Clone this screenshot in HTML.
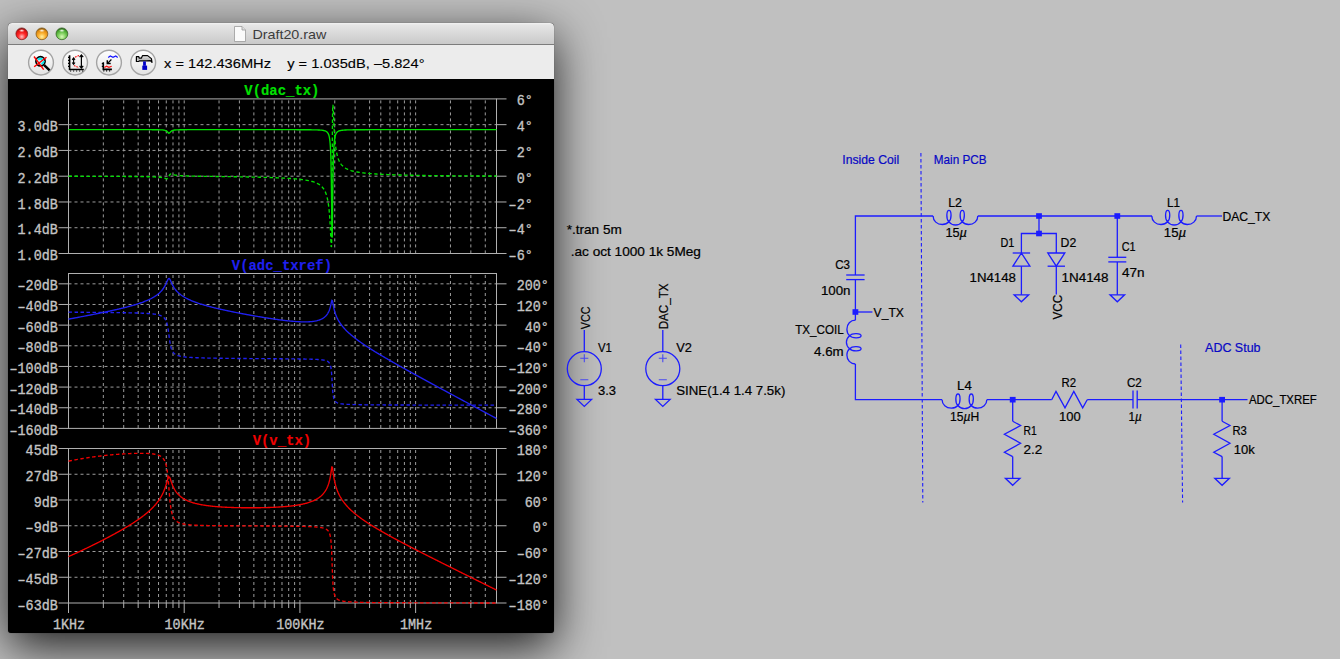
<!DOCTYPE html>
<html><head><meta charset="utf-8"><title>LTspice</title>
<style>
html,body{margin:0;padding:0;}
body{width:1340px;height:659px;overflow:hidden;position:relative;background:#c0c0c0;font-family:"Liberation Sans", sans-serif;}
</style></head><body>
<div style="position:absolute;left:8px;top:23px;width:546px;height:610px;border-radius:4px 4px 3px 3px;background:#000;box-shadow:0 14px 48px rgba(0,0,0,0.85),0 0 1px rgba(0,0,0,0.5);overflow:hidden">
  <div style="position:absolute;left:0;top:0;width:546px;height:21px;background:linear-gradient(#f2f2f2 0px,#e6e6e6 2px,#c9c9c9 21px);border-bottom:1px solid #7c7c7c;"></div>
  <div style="position:absolute;left:0;top:22px;width:546px;height:34px;background:#ececec;"></div>
</div>
<svg width="1340" height="659" style="position:absolute;left:0;top:0">
  <defs>
    <radialGradient id="gr" cx="50%" cy="75%" r="70%"><stop offset="0" stop-color="#ffc0c0"/><stop offset="0.45" stop-color="#ff2a2a"/><stop offset="0.8" stop-color="#e01010"/><stop offset="1" stop-color="#8a1010"/></radialGradient>
    <radialGradient id="gy" cx="50%" cy="75%" r="70%"><stop offset="0" stop-color="#fff0a0"/><stop offset="0.45" stop-color="#fbb030"/><stop offset="0.8" stop-color="#e08a10"/><stop offset="1" stop-color="#8a5a08"/></radialGradient>
    <radialGradient id="gg" cx="50%" cy="75%" r="70%"><stop offset="0" stop-color="#d8f8b8"/><stop offset="0.45" stop-color="#80d060"/><stop offset="0.8" stop-color="#4aa830"/><stop offset="1" stop-color="#2a6a18"/></radialGradient>
    <radialGradient id="hl" cx="50%" cy="50%" r="50%"><stop offset="0" stop-color="#ffffff" stop-opacity="0.95"/><stop offset="1" stop-color="#ffffff" stop-opacity="0"/></radialGradient>
    <linearGradient id="btn" x1="0" y1="0" x2="0" y2="1"><stop offset="0" stop-color="#ffffff"/><stop offset="1" stop-color="#e2e2e2"/></linearGradient>
  </defs>
  <circle cx="21.8" cy="33.8" r="5.9" fill="url(#gr)" stroke="#7a1818" stroke-width="0.7"/>
  <circle cx="41.9" cy="33.8" r="5.9" fill="url(#gy)" stroke="#7a5010" stroke-width="0.7"/>
  <circle cx="61.9" cy="33.8" r="5.9" fill="url(#gg)" stroke="#2a5a1a" stroke-width="0.7"/>
  <ellipse cx="21.8" cy="30.6" rx="3" ry="1.6" fill="url(#hl)"/>
  <ellipse cx="41.9" cy="30.6" rx="3" ry="1.6" fill="url(#hl)"/>
  <ellipse cx="61.9" cy="30.6" rx="3" ry="1.6" fill="url(#hl)"/>
  <!-- doc icon -->
  <path d="M234.5,26.5 H242 L245.5,30 V41.5 H234.5 Z" fill="#fafafa" stroke="#9a9a9a" stroke-width="0.8"/>
  <path d="M242,26.5 V30 H245.5" fill="#e0e0e0" stroke="#9a9a9a" stroke-width="0.8"/>
  <text x="252.4" y="38.5" font-family='"Liberation Sans", sans-serif' font-size="13" fill="#3c3c3c" textLength="74" lengthAdjust="spacingAndGlyphs">Draft20.raw</text>
  <!-- buttons -->
  <g stroke="#a4a4a4" stroke-width="1.4" fill="url(#btn)">
    <circle cx="41" cy="62.6" r="12.4"/>
    <circle cx="75.1" cy="62.6" r="12.4"/>
    <circle cx="109" cy="62.6" r="12.4"/>
    <circle cx="143.2" cy="62.6" r="12.4"/>
  </g>
  <!-- icon 1: magnifier with red X -->
  <g>
    <circle cx="40.5" cy="61.3" r="4.6" fill="#bff4f8" stroke="#000" stroke-width="1.7"/>
    <path d="M38,59.5 Q40,58 42.5,59.5 M41.5,64 Q43.5,63 44,61" stroke="#00e8f0" stroke-width="1.8" fill="none"/>
    <line x1="44.2" y1="65.2" x2="49.6" y2="70.4" stroke="#000" stroke-width="2.4"/>
    <line x1="34" y1="56.5" x2="43.7" y2="69.7" stroke="#ff0000" stroke-width="1.4"/>
    <line x1="46.5" y1="57.2" x2="34.2" y2="66.7" stroke="#ff0000" stroke-width="1.4"/>
  </g>
  <!-- icon 2 -->
  <g>
    <path d="M69.6,55.3 V69.5 H83.8" fill="none" stroke="#000" stroke-width="1.6"/>
    <path d="M68,57.4 h1.4 M68,60.4 h1.4 M68,63.4 h1.4 M68,66.4 h1.4 M70.6,70.4 v1.2 M73.6,70.4 v1.2 M76.6,70.4 v1.2 M79.6,70.4 v1.2 M82.6,70.4 v1.2" stroke="#000" stroke-width="1.1"/>
    <path d="M79,55.5 L74,57.6 M74,65.5 L79,67.8" fill="none" stroke="#ff1010" stroke-width="1.1" stroke-dasharray="1.6 1"/>
    <line x1="73.6" y1="58.3" x2="73.6" y2="64" stroke="#000" stroke-width="1.1"/>
    <path d="M72.2,59.8 L73.6,58 L75,59.8 M72.2,62.5 L73.6,64.3 L75,62.5" fill="none" stroke="#000" stroke-width="1.1"/>
    <line x1="81.4" y1="55.2" x2="81.4" y2="67.8" stroke="#000" stroke-width="1.2"/>
    <path d="M79.6,57.2 L81.4,55 L83.2,57.2 M79.6,65.8 L81.4,68 L83.2,65.8" fill="none" stroke="#000" stroke-width="1.2"/>
  </g>
  <!-- icon 3 -->
  <g>
    <path d="M103.3,62.3 V69.4 H111.9" fill="none" stroke="#000" stroke-width="1.6"/>
    <path d="M101.8,63.6 h1.4 M101.8,66.4 h1.4 M103.8,70.3 v1.2 M106.6,70.3 v1.2 M109.6,70.3 v1.2" stroke="#000" stroke-width="1.1"/>
    <path d="M104.3,67.6 L106.6,66.2 L108.9,67.4 L111.7,66.2" fill="none" stroke="#ff1010" stroke-width="1.2"/>
    <path d="M108.2,57.4 L110.3,56 L113,57.4 L115.8,56 L117.7,57.4" fill="none" stroke="#1010ff" stroke-width="1.2"/>
    <line x1="111.4" y1="59.5" x2="107.6" y2="63.3" stroke="#000" stroke-width="1.2"/>
    <path d="M107.3,60.2 V63.4 H110.7" fill="none" stroke="#000" stroke-width="1.5"/>
  </g>
  <!-- icon 4: hammer -->
  <g>
    <linearGradient id="hg" x1="0" y1="0" x2="0" y2="1"><stop offset="0" stop-color="#f4f4f4"/><stop offset="0.5" stop-color="#b8b8b8"/><stop offset="1" stop-color="#e8e8e8"/></linearGradient>
    <path d="M136.4,56.6 H138.8 L139.2,58.2 H141.3 L142.6,55.6 H147.6 L151.4,58.6 L152,62.4 L150.4,60.6 L146.2,60.9 H139.2 L138.8,61.5 H136.4 Z" fill="url(#hg)" stroke="#000" stroke-width="1.2" stroke-linejoin="round"/>
    <rect x="143.1" y="61.4" width="2.8" height="4.4" fill="#0000c8"/>
    <rect x="142.3" y="65.6" width="4.8" height="4.3" fill="#0000c8"/>
  </g>
  <text x="164" y="67.5" font-family='"Liberation Sans", sans-serif' font-size="13.4" fill="#000" stroke="#000" stroke-width="0.12" textLength="260.5" lengthAdjust="spacingAndGlyphs" xml:space="preserve">x = 142.436MHz    y = 1.035dB, &#x2013;5.824°</text>
</svg>

<svg width="1340" height="659" style="position:absolute;left:0;top:0">
<defs>
<clipPath id="cp0"><rect x="68.0" y="97.9" width="429.0" height="156.6"/></clipPath>
<clipPath id="cp1"><rect x="68.0" y="272.5" width="429.0" height="156.89999999999998"/></clipPath>
<clipPath id="cp2"><rect x="68.0" y="447.5" width="429.0" height="156.5"/></clipPath>
</defs>
<line x1="68.5" y1="124.67" x2="496.5" y2="124.67" stroke="#9c9c9c" stroke-width="1" stroke-dasharray="3 3"/>
<line x1="68.5" y1="150.43" x2="496.5" y2="150.43" stroke="#9c9c9c" stroke-width="1" stroke-dasharray="3 3"/>
<line x1="68.5" y1="176.20" x2="496.5" y2="176.20" stroke="#9c9c9c" stroke-width="1" stroke-dasharray="3 3"/>
<line x1="68.5" y1="201.97" x2="496.5" y2="201.97" stroke="#9c9c9c" stroke-width="1" stroke-dasharray="3 3"/>
<line x1="68.5" y1="227.73" x2="496.5" y2="227.73" stroke="#9c9c9c" stroke-width="1" stroke-dasharray="3 3"/>
<line x1="103.33" y1="100.4" x2="103.33" y2="253.5" stroke="#9c9c9c" stroke-width="1" stroke-dasharray="3 3"/>
<line x1="123.71" y1="100.4" x2="123.71" y2="253.5" stroke="#9c9c9c" stroke-width="1" stroke-dasharray="3 3"/>
<line x1="138.16" y1="100.4" x2="138.16" y2="253.5" stroke="#9c9c9c" stroke-width="1" stroke-dasharray="3 3"/>
<line x1="149.38" y1="100.4" x2="149.38" y2="253.5" stroke="#9c9c9c" stroke-width="1" stroke-dasharray="3 3"/>
<line x1="158.54" y1="100.4" x2="158.54" y2="253.5" stroke="#9c9c9c" stroke-width="1" stroke-dasharray="3 3"/>
<line x1="166.28" y1="100.4" x2="166.28" y2="253.5" stroke="#9c9c9c" stroke-width="1" stroke-dasharray="3 3"/>
<line x1="172.99" y1="100.4" x2="172.99" y2="253.5" stroke="#9c9c9c" stroke-width="1" stroke-dasharray="3 3"/>
<line x1="178.91" y1="100.4" x2="178.91" y2="253.5" stroke="#9c9c9c" stroke-width="1" stroke-dasharray="3 3"/>
<line x1="184.21" y1="100.4" x2="184.21" y2="253.5" stroke="#9c9c9c" stroke-width="1" stroke-dasharray="3 3"/>
<line x1="219.04" y1="100.4" x2="219.04" y2="253.5" stroke="#9c9c9c" stroke-width="1" stroke-dasharray="3 3"/>
<line x1="239.41" y1="100.4" x2="239.41" y2="253.5" stroke="#9c9c9c" stroke-width="1" stroke-dasharray="3 3"/>
<line x1="253.87" y1="100.4" x2="253.87" y2="253.5" stroke="#9c9c9c" stroke-width="1" stroke-dasharray="3 3"/>
<line x1="265.08" y1="100.4" x2="265.08" y2="253.5" stroke="#9c9c9c" stroke-width="1" stroke-dasharray="3 3"/>
<line x1="274.25" y1="100.4" x2="274.25" y2="253.5" stroke="#9c9c9c" stroke-width="1" stroke-dasharray="3 3"/>
<line x1="281.99" y1="100.4" x2="281.99" y2="253.5" stroke="#9c9c9c" stroke-width="1" stroke-dasharray="3 3"/>
<line x1="288.70" y1="100.4" x2="288.70" y2="253.5" stroke="#9c9c9c" stroke-width="1" stroke-dasharray="3 3"/>
<line x1="294.62" y1="100.4" x2="294.62" y2="253.5" stroke="#9c9c9c" stroke-width="1" stroke-dasharray="3 3"/>
<line x1="299.92" y1="100.4" x2="299.92" y2="253.5" stroke="#9c9c9c" stroke-width="1" stroke-dasharray="3 3"/>
<line x1="334.75" y1="100.4" x2="334.75" y2="253.5" stroke="#9c9c9c" stroke-width="1" stroke-dasharray="3 3"/>
<line x1="355.12" y1="100.4" x2="355.12" y2="253.5" stroke="#9c9c9c" stroke-width="1" stroke-dasharray="3 3"/>
<line x1="369.58" y1="100.4" x2="369.58" y2="253.5" stroke="#9c9c9c" stroke-width="1" stroke-dasharray="3 3"/>
<line x1="380.79" y1="100.4" x2="380.79" y2="253.5" stroke="#9c9c9c" stroke-width="1" stroke-dasharray="3 3"/>
<line x1="389.95" y1="100.4" x2="389.95" y2="253.5" stroke="#9c9c9c" stroke-width="1" stroke-dasharray="3 3"/>
<line x1="397.70" y1="100.4" x2="397.70" y2="253.5" stroke="#9c9c9c" stroke-width="1" stroke-dasharray="3 3"/>
<line x1="404.41" y1="100.4" x2="404.41" y2="253.5" stroke="#9c9c9c" stroke-width="1" stroke-dasharray="3 3"/>
<line x1="410.33" y1="100.4" x2="410.33" y2="253.5" stroke="#9c9c9c" stroke-width="1" stroke-dasharray="3 3"/>
<line x1="415.62" y1="100.4" x2="415.62" y2="253.5" stroke="#9c9c9c" stroke-width="1" stroke-dasharray="3 3"/>
<line x1="450.46" y1="100.4" x2="450.46" y2="253.5" stroke="#9c9c9c" stroke-width="1" stroke-dasharray="3 3"/>
<line x1="470.83" y1="100.4" x2="470.83" y2="253.5" stroke="#9c9c9c" stroke-width="1" stroke-dasharray="3 3"/>
<line x1="485.29" y1="100.4" x2="485.29" y2="253.5" stroke="#9c9c9c" stroke-width="1" stroke-dasharray="3 3"/>
<rect x="68.5" y="98.9" width="428.0" height="154.6" fill="none" stroke="#b0b0b0" stroke-width="1"/>
<line x1="58.5" y1="124.67" x2="68.5" y2="124.67" stroke="#b0b0b0" stroke-width="1"/>
<text x="17.55" y="0" transform="translate(0 131.24) scale(1 1.15)" font-family='"Liberation Mono", monospace' font-size="13.4" font-weight="normal" fill="#c4c4c4" stroke="#c4c4c4" stroke-width="0.32" textLength="40.25" lengthAdjust="spacingAndGlyphs">3.0dB</text>
<line x1="58.5" y1="150.43" x2="68.5" y2="150.43" stroke="#b0b0b0" stroke-width="1"/>
<text x="17.55" y="0" transform="translate(0 157.01) scale(1 1.15)" font-family='"Liberation Mono", monospace' font-size="13.4" font-weight="normal" fill="#c4c4c4" stroke="#c4c4c4" stroke-width="0.32" textLength="40.25" lengthAdjust="spacingAndGlyphs">2.6dB</text>
<line x1="58.5" y1="176.20" x2="68.5" y2="176.20" stroke="#b0b0b0" stroke-width="1"/>
<text x="17.55" y="0" transform="translate(0 182.78) scale(1 1.15)" font-family='"Liberation Mono", monospace' font-size="13.4" font-weight="normal" fill="#c4c4c4" stroke="#c4c4c4" stroke-width="0.32" textLength="40.25" lengthAdjust="spacingAndGlyphs">2.2dB</text>
<line x1="58.5" y1="201.97" x2="68.5" y2="201.97" stroke="#b0b0b0" stroke-width="1"/>
<text x="17.55" y="0" transform="translate(0 208.54) scale(1 1.15)" font-family='"Liberation Mono", monospace' font-size="13.4" font-weight="normal" fill="#c4c4c4" stroke="#c4c4c4" stroke-width="0.32" textLength="40.25" lengthAdjust="spacingAndGlyphs">1.8dB</text>
<line x1="58.5" y1="227.73" x2="68.5" y2="227.73" stroke="#b0b0b0" stroke-width="1"/>
<text x="17.55" y="0" transform="translate(0 234.31) scale(1 1.15)" font-family='"Liberation Mono", monospace' font-size="13.4" font-weight="normal" fill="#c4c4c4" stroke="#c4c4c4" stroke-width="0.32" textLength="40.25" lengthAdjust="spacingAndGlyphs">1.4dB</text>
<line x1="58.5" y1="253.50" x2="68.5" y2="253.50" stroke="#b0b0b0" stroke-width="1"/>
<text x="17.55" y="0" transform="translate(0 260.08) scale(1 1.15)" font-family='"Liberation Mono", monospace' font-size="13.4" font-weight="normal" fill="#c4c4c4" stroke="#c4c4c4" stroke-width="0.32" textLength="40.25" lengthAdjust="spacingAndGlyphs">1.0dB</text>
<line x1="496.5" y1="98.90" x2="506.5" y2="98.90" stroke="#b0b0b0" stroke-width="1"/>
<text x="516.65" y="0" transform="translate(0 105.48) scale(1 1.15)" font-family='"Liberation Mono", monospace' font-size="13.4" font-weight="normal" fill="#c4c4c4" stroke="#c4c4c4" stroke-width="0.32" textLength="16.10" lengthAdjust="spacingAndGlyphs">6°</text>
<line x1="496.5" y1="124.67" x2="506.5" y2="124.67" stroke="#b0b0b0" stroke-width="1"/>
<text x="516.65" y="0" transform="translate(0 131.24) scale(1 1.15)" font-family='"Liberation Mono", monospace' font-size="13.4" font-weight="normal" fill="#c4c4c4" stroke="#c4c4c4" stroke-width="0.32" textLength="16.10" lengthAdjust="spacingAndGlyphs">4°</text>
<line x1="496.5" y1="150.43" x2="506.5" y2="150.43" stroke="#b0b0b0" stroke-width="1"/>
<text x="516.65" y="0" transform="translate(0 157.01) scale(1 1.15)" font-family='"Liberation Mono", monospace' font-size="13.4" font-weight="normal" fill="#c4c4c4" stroke="#c4c4c4" stroke-width="0.32" textLength="16.10" lengthAdjust="spacingAndGlyphs">2°</text>
<line x1="496.5" y1="176.20" x2="506.5" y2="176.20" stroke="#b0b0b0" stroke-width="1"/>
<text x="516.65" y="0" transform="translate(0 182.78) scale(1 1.15)" font-family='"Liberation Mono", monospace' font-size="13.4" font-weight="normal" fill="#c4c4c4" stroke="#c4c4c4" stroke-width="0.32" textLength="16.10" lengthAdjust="spacingAndGlyphs">0°</text>
<line x1="496.5" y1="201.97" x2="506.5" y2="201.97" stroke="#b0b0b0" stroke-width="1"/>
<text x="508.60" y="0" transform="translate(0 208.54) scale(1 1.15)" font-family='"Liberation Mono", monospace' font-size="13.4" font-weight="normal" fill="#c4c4c4" stroke="#c4c4c4" stroke-width="0.32" textLength="24.15" lengthAdjust="spacingAndGlyphs">&#x2013;2°</text>
<line x1="496.5" y1="227.73" x2="506.5" y2="227.73" stroke="#b0b0b0" stroke-width="1"/>
<text x="508.60" y="0" transform="translate(0 234.31) scale(1 1.15)" font-family='"Liberation Mono", monospace' font-size="13.4" font-weight="normal" fill="#c4c4c4" stroke="#c4c4c4" stroke-width="0.32" textLength="24.15" lengthAdjust="spacingAndGlyphs">&#x2013;4°</text>
<line x1="496.5" y1="253.50" x2="506.5" y2="253.50" stroke="#b0b0b0" stroke-width="1"/>
<text x="508.60" y="0" transform="translate(0 260.08) scale(1 1.15)" font-family='"Liberation Mono", monospace' font-size="13.4" font-weight="normal" fill="#c4c4c4" stroke="#c4c4c4" stroke-width="0.32" textLength="24.15" lengthAdjust="spacingAndGlyphs">&#x2013;6°</text>
<text x="244.32" y="0" transform="translate(0 95.38) scale(1 1.15)" font-family='"Liberation Mono", monospace' font-size="13.4" font-weight="bold" fill="#00e000" stroke="#00e000" stroke-width="0.1" textLength="75.15" lengthAdjust="spacingAndGlyphs">V(dac_tx)</text>
<g clip-path="url(#cp0)">
<path d="M68.50,176.27 L69.19,176.27 L69.87,176.27 L70.56,176.28 L71.24,176.28 L71.93,176.28 L72.61,176.28 L73.30,176.28 L73.98,176.28 L74.67,176.28 L75.35,176.28 L76.04,176.29 L76.72,176.29 L77.41,176.29 L78.09,176.29 L78.78,176.29 L79.46,176.29 L80.15,176.29 L80.83,176.29 L81.52,176.30 L82.20,176.30 L82.89,176.30 L83.57,176.30 L84.26,176.30 L84.94,176.30 L85.63,176.30 L86.31,176.31 L87.00,176.31 L87.68,176.31 L88.37,176.31 L89.05,176.31 L89.74,176.31 L90.42,176.31 L91.11,176.32 L91.79,176.32 L92.48,176.32 L93.16,176.32 L93.85,176.32 L94.53,176.33 L95.22,176.33 L95.90,176.33 L96.59,176.33 L97.27,176.33 L97.96,176.33 L98.64,176.34 L99.33,176.34 L100.01,176.34 L100.70,176.34 L101.38,176.35 L102.07,176.35 L102.75,176.35 L103.44,176.35 L104.12,176.35 L104.81,176.36 L105.49,176.36 L106.18,176.36 L106.86,176.36 L107.55,176.37 L108.23,176.37 L108.92,176.37 L109.60,176.37 L110.29,176.38 L110.97,176.38 L111.66,176.38 L112.34,176.39 L113.03,176.39 L113.71,176.39 L114.40,176.40 L115.09,176.40 L115.77,176.40 L116.46,176.40 L117.14,176.41 L117.83,176.41 L118.51,176.42 L119.20,176.42 L119.88,176.42 L120.57,176.43 L121.25,176.43 L121.94,176.43 L122.62,176.44 L123.31,176.44 L123.99,176.45 L124.68,176.45 L125.36,176.46 L126.05,176.46 L126.73,176.46 L127.42,176.47 L128.10,176.47 L128.79,176.48 L129.47,176.49 L130.16,176.49 L130.84,176.50 L131.53,176.50 L132.21,176.51 L132.90,176.51 L133.58,176.52 L134.27,176.53 L134.95,176.53 L135.64,176.54 L136.32,176.55 L137.01,176.56 L137.69,176.56 L138.38,176.57 L139.06,176.58 L139.75,176.59 L140.43,176.60 L141.12,176.61 L141.80,176.62 L142.49,176.63 L143.17,176.64 L143.86,176.65 L144.54,176.66 L145.23,176.67 L145.91,176.69 L146.60,176.70 L147.28,176.71 L147.97,176.73 L148.65,176.75 L149.34,176.76 L150.02,176.78 L150.71,176.80 L151.39,176.82 L152.08,176.84 L152.76,176.87 L153.45,176.89 L154.13,176.92 L154.82,176.95 L155.50,176.98 L156.19,177.02 L156.87,177.06 L157.56,177.10 L158.24,177.15 L158.84,177.20 L159.44,177.25 L160.04,177.31 L160.64,177.38 L161.24,177.45 L161.84,177.53 L162.44,177.63 L163.04,177.74 L163.64,177.86 L164.22,178.00 L164.81,178.16 L165.40,178.33 L165.98,178.51 L166.57,178.67 L167.18,178.72 L167.74,178.50 L168.18,178.03 L168.48,177.49 L168.74,176.92 L168.97,176.37 L169.20,175.81 L169.45,175.25 L169.76,174.71 L170.17,174.25 L170.73,174.01 L171.34,174.06 L171.93,174.21 L172.51,174.39 L173.10,174.57 L173.69,174.73 L174.27,174.87 L174.88,175.00 L175.50,175.11 L176.11,175.21 L176.72,175.29 L177.33,175.37 L177.94,175.43 L178.56,175.50 L179.31,175.56 L180.00,175.61 L180.68,175.66 L181.37,175.71 L182.05,175.74 L182.74,175.78 L183.42,175.81 L184.11,175.84 L184.79,175.87 L185.48,175.90 L186.16,175.92 L186.85,175.95 L187.53,175.97 L188.22,175.99 L188.90,176.01 L189.59,176.03 L190.27,176.05 L190.96,176.06 L191.64,176.08 L192.33,176.10 L193.01,176.11 L193.70,176.13 L194.38,176.14 L195.07,176.15 L195.75,176.17 L196.44,176.18 L197.12,176.19 L197.81,176.20 L198.49,176.21 L199.18,176.23 L199.86,176.24 L200.55,176.25 L201.23,176.26 L201.92,176.27 L202.60,176.28 L203.29,176.29 L203.97,176.30 L204.66,176.31 L205.34,176.32 L206.03,176.33 L206.71,176.34 L207.40,176.35 L208.08,176.36 L208.77,176.37 L209.45,176.38 L210.14,176.39 L210.82,176.40 L211.51,176.41 L212.19,176.42 L212.88,176.43 L213.56,176.43 L214.25,176.44 L214.93,176.45 L215.62,176.46 L216.30,176.47 L216.99,176.48 L217.67,176.49 L218.36,176.50 L219.05,176.51 L219.73,176.52 L220.42,176.53 L221.10,176.54 L221.79,176.54 L222.47,176.55 L223.16,176.56 L223.84,176.57 L224.53,176.58 L225.21,176.59 L225.90,176.60 L226.58,176.61 L227.27,176.62 L227.95,176.63 L228.64,176.64 L229.32,176.65 L230.01,176.66 L230.69,176.67 L231.38,176.68 L232.06,176.69 L232.75,176.70 L233.43,176.71 L234.12,176.72 L234.80,176.73 L235.49,176.74 L236.17,176.76 L236.86,176.77 L237.54,176.78 L238.23,176.79 L238.91,176.80 L239.60,176.81 L240.28,176.82 L240.97,176.84 L241.65,176.85 L242.34,176.86 L243.02,176.87 L243.71,176.88 L244.39,176.90 L245.08,176.91 L245.76,176.92 L246.45,176.93 L247.13,176.95 L247.82,176.96 L248.50,176.97 L249.19,176.99 L249.87,177.00 L250.56,177.02 L251.24,177.03 L251.93,177.05 L252.61,177.06 L253.30,177.08 L253.98,177.09 L254.67,177.11 L255.35,177.12 L256.04,177.14 L256.72,177.15 L257.41,177.17 L258.09,177.19 L258.78,177.20 L259.46,177.22 L260.15,177.24 L260.83,177.26 L261.52,177.27 L262.20,177.29 L262.89,177.31 L263.57,177.33 L264.26,177.35 L264.94,177.37 L265.63,177.39 L266.32,177.41 L267.00,177.43 L267.69,177.45 L268.37,177.47 L269.06,177.50 L269.74,177.52 L270.43,177.54 L271.11,177.57 L271.80,177.59 L272.48,177.61 L273.17,177.64 L273.85,177.66 L274.54,177.69 L275.22,177.72 L275.91,177.74 L276.59,177.77 L277.28,177.80 L277.96,177.83 L278.65,177.86 L279.33,177.89 L280.02,177.92 L280.70,177.95 L281.39,177.98 L282.07,178.02 L282.76,178.05 L283.44,178.09 L284.13,178.12 L284.81,178.16 L285.50,178.20 L286.18,178.24 L286.87,178.28 L287.55,178.32 L288.24,178.36 L288.92,178.40 L289.61,178.45 L290.29,178.50 L290.98,178.54 L291.66,178.59 L292.35,178.64 L293.03,178.70 L293.72,178.75 L294.40,178.81 L295.09,178.86 L295.77,178.92 L296.46,178.99 L297.14,179.05 L297.83,179.12 L298.51,179.19 L299.20,179.26 L299.88,179.33 L300.57,179.41 L301.25,179.49 L301.94,179.58 L302.62,179.67 L303.31,179.76 L303.99,179.86 L304.68,179.96 L305.36,180.06 L306.05,180.17 L306.73,180.29 L307.42,180.42 L308.10,180.55 L308.79,180.68 L309.47,180.83 L310.16,180.98 L310.84,181.15 L311.53,181.32 L312.22,181.51 L312.90,181.71 L313.59,181.92 L314.27,182.15 L314.96,182.40 L315.64,182.67 L316.33,182.96 L317.01,183.27 L317.70,183.62 L318.38,183.99 L319.07,184.41 L319.58,184.75 L320.09,185.12 L320.61,185.53 L321.12,185.97 L321.63,186.45 L322.15,186.98 L322.66,187.57 L323.18,188.22 L323.53,188.72 L323.88,189.23 L324.20,189.75 L324.52,190.32 L324.81,190.88 L325.09,191.44 L325.34,192.00 L325.57,192.56 L325.82,193.17 L326.04,193.79 L326.25,194.39 L326.46,195.03 L326.64,195.63 L326.82,196.28 L326.98,196.88 L327.14,197.51 L327.29,198.13 L327.44,198.80 L327.57,199.44 L327.71,200.12 L327.82,200.72 L327.94,201.35 L328.05,202.01 L328.17,202.70 L328.28,203.43 L328.37,204.04 L328.46,204.68 L328.56,205.34 L328.65,206.04 L328.74,206.77 L328.83,207.52 L328.90,208.12 L328.97,208.74 L329.03,209.38 L329.10,210.04 L329.17,210.72 L329.24,211.44 L329.31,212.18 L329.38,212.95 L329.45,213.75 L329.51,214.57 L329.58,215.45 L329.65,216.35 L329.70,216.96 L329.74,217.60 L329.79,218.25 L329.83,218.93 L329.88,219.61 L329.92,220.32 L329.97,221.05 L330.02,221.80 L330.06,222.56 L330.11,223.35 L330.15,224.16 L330.20,224.98 L330.24,225.84 L330.29,226.72 L330.34,227.61 L330.37,228.29 L330.40,229.00 L330.45,229.95 L330.50,230.91 L330.54,231.90 L330.59,232.91 L330.63,233.94 L330.68,234.98 L330.71,235.76 L330.75,236.56 L330.79,237.62 L330.83,238.50 L330.86,239.11 L330.88,239.73 L330.91,240.34 L330.94,240.94 L330.96,241.56 L330.99,242.17 L331.02,242.78 L331.05,243.40 L331.08,244.01 L331.11,244.62 L331.14,245.22 L331.18,245.83 L331.22,246.43 L331.27,247.03 L331.49,246.46 L331.52,245.86 L331.54,245.24 L331.56,244.62 L331.58,244.02 L331.59,243.41 L331.61,242.80 L331.62,242.17 L331.63,241.54 L331.64,240.91 L331.66,240.30 L331.67,239.66 L331.68,239.04 L331.69,238.39 L331.69,237.77 L331.70,237.13 L331.71,236.47 L331.72,235.84 L331.73,235.20 L331.74,234.54 L331.74,233.93 L331.75,233.30 L331.76,232.66 L331.76,232.00 L331.77,231.32 L331.78,230.72 L331.78,230.09 L331.79,229.46 L331.80,228.81 L331.80,228.15 L331.81,227.47 L331.81,226.78 L331.82,226.18 L331.82,225.57 L331.83,224.95 L331.84,224.32 L331.84,223.68 L331.85,223.02 L331.85,222.36 L331.86,221.69 L331.86,221.01 L331.87,220.31 L331.87,219.61 L331.88,218.90 L331.88,218.30 L331.89,217.69 L331.89,217.08 L331.90,216.46 L331.90,215.83 L331.90,215.20 L331.91,214.56 L331.91,213.91 L331.92,213.26 L331.92,212.60 L331.93,211.94 L331.93,211.26 L331.93,210.59 L331.94,209.90 L331.94,209.21 L331.95,208.52 L331.95,207.82 L331.96,207.11 L331.96,206.40 L331.97,205.68 L331.97,204.96 L331.97,204.23 L331.98,203.50 L331.98,202.76 L331.99,202.01 L331.99,201.27 L332.00,200.66 L332.00,200.06 L332.00,199.45 L332.01,198.84 L332.01,198.23 L332.01,197.61 L332.02,196.99 L332.02,196.37 L332.02,195.74 L332.03,195.12 L332.03,194.49 L332.03,193.86 L332.04,193.22 L332.04,192.59 L332.05,191.95 L332.05,191.31 L332.05,190.67 L332.06,190.03 L332.06,189.38 L332.06,188.74 L332.07,188.09 L332.07,187.44 L332.07,186.79 L332.08,186.13 L332.08,185.48 L332.08,184.82 L332.09,184.17 L332.09,183.51 L332.09,182.85 L332.10,182.19 L332.10,181.53 L332.11,180.87 L332.11,180.21 L332.11,179.55 L332.12,178.89 L332.12,178.23 L332.12,177.56 L332.13,176.90 L332.13,176.24 L332.13,175.57 L332.14,174.91 L332.14,174.25 L332.14,173.59 L332.15,172.92 L332.15,172.26 L332.15,171.60 L332.16,170.94 L332.16,170.29 L332.17,169.62 L332.17,168.96 L332.17,168.31 L332.18,167.65 L332.18,166.99 L332.18,166.34 L332.19,165.69 L332.19,165.04 L332.19,164.39 L332.20,163.74 L332.20,163.09 L332.20,162.45 L332.21,161.80 L332.21,161.16 L332.21,160.52 L332.22,159.88 L332.22,159.25 L332.23,158.61 L332.23,157.98 L332.23,157.35 L332.24,156.73 L332.24,156.10 L332.24,155.48 L332.25,154.86 L332.25,154.25 L332.25,153.63 L332.26,153.02 L332.26,152.41 L332.26,151.81 L332.27,151.20 L332.27,150.46 L332.28,149.81 L332.28,149.12 L332.28,148.38 L332.29,147.65 L332.29,146.93 L332.30,146.21 L332.30,145.50 L332.31,144.79 L332.31,144.09 L332.32,143.39 L332.32,142.70 L332.32,142.01 L332.33,141.33 L332.33,140.66 L332.34,139.99 L332.34,139.33 L332.35,138.68 L332.35,138.03 L332.35,137.39 L332.36,136.75 L332.36,136.12 L332.37,135.50 L332.37,134.89 L332.38,134.28 L332.38,133.67 L332.39,132.96 L332.39,132.26 L332.40,131.56 L332.40,130.88 L332.41,130.20 L332.41,129.58 L332.42,128.88 L332.42,128.24 L332.43,127.60 L332.43,126.98 L332.44,126.37 L332.44,125.76 L332.45,125.07 L332.46,124.39 L332.46,123.73 L332.47,123.08 L332.48,122.44 L332.48,121.81 L332.49,121.20 L332.50,120.52 L332.50,119.86 L332.51,119.21 L332.52,118.58 L332.52,117.97 L332.53,117.31 L332.54,116.66 L332.55,116.03 L332.56,115.43 L332.56,114.78 L332.57,114.18 L332.58,113.56 L332.59,112.93 L332.60,112.33 L332.61,111.71 L332.62,111.07 L332.64,110.43 L332.65,109.83 L332.66,109.19 L332.68,108.57 L332.69,107.95 L332.71,107.33 L332.73,106.73 L332.76,106.12 L332.79,105.51 L332.86,104.91 L333.00,105.50 L333.05,106.11 L333.09,106.72 L333.13,107.33 L333.16,107.94 L333.19,108.55 L333.22,109.15 L333.25,109.75 L333.28,110.37 L333.30,110.98 L333.33,111.58 L333.36,112.18 L333.38,112.79 L333.41,113.41 L333.44,114.03 L333.46,114.64 L333.51,115.70 L333.55,116.76 L333.60,117.81 L333.65,118.84 L333.69,119.86 L333.74,120.86 L333.78,121.84 L333.83,122.80 L333.87,123.74 L333.92,124.66 L333.96,125.56 L334.01,126.43 L334.06,127.29 L334.10,128.12 L334.14,128.76 L334.19,129.72 L334.24,130.49 L334.28,131.24 L334.33,131.97 L334.38,132.68 L334.42,133.37 L334.47,134.05 L334.51,134.70 L334.56,135.34 L334.60,135.96 L334.65,136.56 L334.72,137.44 L334.79,138.29 L334.85,139.10 L334.92,139.88 L334.99,140.63 L335.06,141.36 L335.13,142.05 L335.20,142.73 L335.27,143.37 L335.33,144.00 L335.40,144.60 L335.49,145.38 L335.59,146.11 L335.68,146.82 L335.77,147.49 L335.86,148.14 L335.95,148.76 L336.04,149.35 L336.16,150.06 L336.27,150.73 L336.38,151.38 L336.50,151.99 L336.64,152.68 L336.77,153.34 L336.91,153.96 L337.05,154.55 L337.21,155.21 L337.37,155.82 L337.53,156.40 L337.71,157.03 L337.89,157.62 L338.10,158.24 L338.30,158.82 L338.53,159.42 L338.76,159.99 L339.01,160.57 L339.28,161.14 L339.56,161.70 L339.85,162.25 L340.17,162.80 L340.52,163.34 L340.86,163.84 L341.22,164.34 L341.61,164.82 L342.02,165.29 L342.53,165.83 L343.04,166.32 L343.56,166.76 L344.07,167.17 L344.58,167.55 L345.10,167.90 L345.61,168.22 L346.30,168.61 L346.98,168.97 L347.67,169.29 L348.35,169.59 L349.04,169.87 L349.72,170.12 L350.41,170.36 L351.09,170.58 L351.78,170.78 L352.46,170.98 L353.15,171.15 L353.83,171.32 L354.52,171.48 L355.20,171.63 L355.89,171.77 L356.57,171.90 L357.26,172.03 L357.94,172.15 L358.63,172.26 L359.31,172.37 L360.00,172.47 L360.68,172.57 L361.37,172.67 L362.05,172.76 L362.74,172.84 L363.42,172.92 L364.11,173.00 L364.79,173.08 L365.48,173.15 L366.16,173.22 L366.85,173.29 L367.53,173.35 L368.22,173.42 L368.90,173.48 L369.59,173.53 L370.28,173.59 L370.96,173.65 L371.65,173.70 L372.33,173.75 L373.02,173.80 L373.70,173.85 L374.39,173.89 L375.07,173.94 L375.76,173.98 L376.44,174.02 L377.13,174.07 L377.81,174.11 L378.50,174.15 L379.18,174.18 L379.87,174.22 L380.55,174.26 L381.24,174.29 L381.92,174.33 L382.61,174.36 L383.29,174.39 L383.98,174.42 L384.66,174.45 L385.35,174.48 L386.03,174.51 L386.72,174.54 L387.40,174.57 L388.09,174.60 L388.77,174.62 L389.46,174.65 L390.14,174.68 L390.83,174.70 L391.51,174.73 L392.20,174.75 L392.88,174.77 L393.57,174.80 L394.25,174.82 L394.94,174.84 L395.62,174.86 L396.31,174.88 L396.99,174.90 L397.68,174.92 L398.36,174.94 L399.05,174.96 L399.73,174.98 L400.42,175.00 L401.10,175.02 L401.79,175.04 L402.47,175.06 L403.16,175.07 L403.84,175.09 L404.53,175.11 L405.21,175.12 L405.90,175.14 L406.58,175.16 L407.27,175.17 L407.95,175.19 L408.64,175.20 L409.32,175.22 L410.01,175.23 L410.69,175.25 L411.38,175.26 L412.06,175.27 L412.75,175.29 L413.43,175.30 L414.12,175.31 L414.80,175.33 L415.49,175.34 L416.18,175.35 L416.86,175.36 L417.55,175.38 L418.23,175.39 L418.92,175.40 L419.60,175.41 L420.29,175.42 L420.97,175.43 L421.66,175.45 L422.34,175.46 L423.03,175.47 L423.71,175.48 L424.40,175.49 L425.08,175.50 L425.77,175.51 L426.45,175.52 L427.14,175.53 L427.82,175.54 L428.51,175.55 L429.19,175.56 L429.88,175.56 L430.56,175.57 L431.25,175.58 L431.93,175.59 L432.62,175.60 L433.30,175.61 L433.99,175.62 L434.67,175.62 L435.36,175.63 L436.04,175.64 L436.73,175.65 L437.41,175.66 L438.10,175.66 L438.78,175.67 L439.47,175.68 L440.15,175.69 L440.84,175.69 L441.52,175.70 L442.21,175.71 L442.89,175.71 L443.58,175.72 L444.26,175.73 L444.95,175.73 L445.63,175.74 L446.32,175.75 L447.00,175.75 L447.69,175.76 L448.37,175.76 L449.06,175.77 L449.74,175.78 L450.43,175.78 L451.11,175.79 L451.80,175.79 L452.48,175.80 L453.17,175.81 L453.85,175.81 L454.54,175.82 L455.22,175.82 L455.91,175.83 L456.59,175.83 L457.28,175.84 L457.96,175.84 L458.65,175.85 L459.33,175.85 L460.02,175.86 L460.70,175.86 L461.39,175.87 L462.08,175.87 L462.76,175.87 L463.45,175.88 L464.13,175.88 L464.82,175.89 L465.50,175.89 L466.19,175.90 L466.87,175.90 L467.56,175.90 L468.24,175.91 L468.93,175.91 L469.61,175.92 L470.30,175.92 L470.98,175.92 L471.67,175.93 L472.35,175.93 L473.04,175.94 L473.72,175.94 L474.41,175.94 L475.09,175.95 L475.78,175.95 L476.46,175.95 L477.15,175.96 L477.83,175.96 L478.52,175.96 L479.20,175.97 L479.89,175.97 L480.57,175.97 L481.26,175.98 L481.94,175.98 L482.63,175.98 L483.31,175.98 L484.00,175.99 L484.68,175.99 L485.37,175.99 L486.05,176.00 L486.74,176.00 L487.42,176.00 L488.11,176.00 L488.79,176.01 L489.48,176.01 L490.16,176.01 L490.85,176.01 L491.53,176.02 L492.22,176.02 L492.90,176.02 L493.59,176.02 L494.27,176.03 L494.96,176.03 L495.64,176.03 L496.33,176.03 L496.50,176.03" fill="none" stroke="#00e000" stroke-width="1.35" stroke-dasharray="3.5 2.5"/>
<path d="M68.50,129.66 L69.19,129.66 L69.87,129.66 L70.56,129.66 L71.24,129.66 L71.93,129.66 L72.61,129.66 L73.30,129.66 L73.98,129.66 L74.67,129.66 L75.35,129.66 L76.04,129.66 L76.72,129.66 L77.41,129.66 L78.09,129.66 L78.78,129.66 L79.46,129.66 L80.15,129.66 L80.83,129.66 L81.52,129.66 L82.20,129.66 L82.89,129.66 L83.57,129.66 L84.26,129.66 L84.94,129.66 L85.63,129.66 L86.31,129.66 L87.00,129.66 L87.68,129.66 L88.37,129.66 L89.05,129.66 L89.74,129.66 L90.42,129.66 L91.11,129.66 L91.79,129.66 L92.48,129.66 L93.16,129.66 L93.85,129.66 L94.53,129.66 L95.22,129.66 L95.90,129.66 L96.59,129.66 L97.27,129.66 L97.96,129.66 L98.64,129.66 L99.33,129.66 L100.01,129.66 L100.70,129.66 L101.38,129.66 L102.07,129.66 L102.75,129.66 L103.44,129.66 L104.12,129.66 L104.81,129.66 L105.49,129.66 L106.18,129.66 L106.86,129.66 L107.55,129.66 L108.23,129.66 L108.92,129.66 L109.60,129.66 L110.29,129.66 L110.97,129.66 L111.66,129.66 L112.34,129.66 L113.03,129.66 L113.71,129.66 L114.40,129.66 L115.09,129.66 L115.77,129.66 L116.46,129.66 L117.14,129.66 L117.83,129.66 L118.51,129.66 L119.20,129.66 L119.88,129.66 L120.57,129.66 L121.25,129.66 L121.94,129.66 L122.62,129.66 L123.31,129.66 L123.99,129.66 L124.68,129.66 L125.36,129.66 L126.05,129.66 L126.73,129.66 L127.42,129.66 L128.10,129.66 L128.79,129.66 L129.47,129.66 L130.16,129.66 L130.84,129.66 L131.53,129.66 L132.21,129.66 L132.90,129.66 L133.58,129.66 L134.27,129.66 L134.95,129.67 L135.64,129.67 L136.32,129.67 L137.01,129.67 L137.69,129.67 L138.38,129.67 L139.06,129.67 L139.75,129.67 L140.43,129.67 L141.12,129.67 L141.80,129.67 L142.49,129.67 L143.17,129.67 L143.86,129.67 L144.54,129.68 L145.23,129.68 L145.91,129.68 L146.60,129.68 L147.28,129.68 L147.97,129.68 L148.65,129.69 L149.34,129.69 L150.02,129.69 L150.71,129.69 L151.39,129.70 L152.08,129.70 L152.76,129.70 L153.45,129.71 L154.13,129.71 L154.82,129.72 L155.50,129.73 L156.19,129.73 L156.87,129.74 L157.56,129.75 L158.24,129.77 L158.87,129.78 L159.48,129.80 L160.09,129.82 L160.71,129.84 L161.32,129.87 L161.93,129.90 L162.54,129.95 L163.15,130.01 L163.77,130.09 L164.38,130.19 L164.96,130.33 L165.55,130.52 L166.11,130.78 L166.62,131.10 L167.11,131.51 L167.54,131.97 L167.95,132.45 L168.35,132.91 L168.86,133.23 L169.45,133.03 L169.89,132.58 L170.29,132.09 L170.70,131.64 L171.16,131.22 L171.67,130.86 L172.21,130.59 L172.79,130.38 L173.38,130.23 L173.99,130.11 L174.60,130.03 L175.22,129.96 L175.83,129.91 L176.44,129.88 L177.05,129.84 L177.66,129.82 L178.28,129.80 L178.89,129.78 L179.65,129.76 L180.34,129.75 L181.02,129.74 L181.71,129.73 L182.39,129.72 L183.08,129.72 L183.76,129.71 L184.45,129.71 L185.13,129.70 L185.82,129.70 L186.50,129.70 L187.19,129.69 L187.87,129.69 L188.56,129.69 L189.24,129.68 L189.93,129.68 L190.61,129.68 L191.30,129.68 L191.98,129.68 L192.67,129.68 L193.35,129.68 L194.04,129.67 L194.72,129.67 L195.41,129.67 L196.10,129.67 L196.78,129.67 L197.47,129.67 L198.15,129.67 L198.84,129.67 L199.52,129.67 L200.21,129.67 L200.89,129.67 L201.58,129.67 L202.26,129.67 L202.95,129.66 L203.63,129.66 L204.32,129.66 L205.00,129.66 L205.69,129.66 L206.37,129.66 L207.06,129.66 L207.74,129.66 L208.43,129.66 L209.11,129.66 L209.80,129.66 L210.48,129.66 L211.17,129.66 L211.85,129.66 L212.54,129.66 L213.22,129.66 L213.91,129.66 L214.59,129.66 L215.28,129.66 L215.96,129.66 L216.65,129.66 L217.33,129.66 L218.02,129.66 L218.70,129.66 L219.39,129.66 L220.07,129.66 L220.76,129.66 L221.44,129.66 L222.13,129.66 L222.81,129.66 L223.50,129.66 L224.18,129.66 L224.87,129.66 L225.55,129.66 L226.24,129.66 L226.92,129.66 L227.61,129.66 L228.29,129.66 L228.98,129.66 L229.66,129.66 L230.35,129.66 L231.03,129.66 L231.72,129.66 L232.40,129.66 L233.09,129.66 L233.77,129.66 L234.46,129.66 L235.14,129.66 L235.83,129.66 L236.51,129.66 L237.20,129.66 L237.88,129.66 L238.57,129.66 L239.25,129.66 L239.94,129.66 L240.62,129.66 L241.31,129.66 L241.99,129.66 L242.68,129.66 L243.37,129.66 L244.05,129.66 L244.74,129.66 L245.42,129.66 L246.11,129.66 L246.79,129.66 L247.48,129.66 L248.16,129.66 L248.85,129.66 L249.53,129.66 L250.22,129.66 L250.90,129.66 L251.59,129.66 L252.27,129.66 L252.96,129.66 L253.64,129.66 L254.33,129.66 L255.01,129.66 L255.70,129.66 L256.38,129.66 L257.07,129.66 L257.75,129.66 L258.44,129.66 L259.12,129.66 L259.81,129.66 L260.49,129.66 L261.18,129.66 L261.86,129.66 L262.55,129.66 L263.23,129.66 L263.92,129.66 L264.60,129.66 L265.29,129.66 L265.97,129.66 L266.66,129.66 L267.34,129.66 L268.03,129.66 L268.71,129.66 L269.40,129.66 L270.08,129.66 L270.77,129.67 L271.45,129.67 L272.14,129.67 L272.82,129.67 L273.51,129.67 L274.19,129.67 L274.88,129.67 L275.56,129.67 L276.25,129.67 L276.93,129.67 L277.62,129.67 L278.30,129.67 L278.99,129.67 L279.67,129.67 L280.36,129.67 L281.04,129.67 L281.73,129.67 L282.41,129.67 L283.10,129.67 L283.78,129.67 L284.47,129.68 L285.15,129.68 L285.84,129.68 L286.52,129.68 L287.21,129.68 L287.89,129.68 L288.58,129.68 L289.27,129.68 L289.95,129.68 L290.64,129.68 L291.32,129.69 L292.01,129.69 L292.69,129.69 L293.38,129.69 L294.06,129.69 L294.75,129.69 L295.43,129.69 L296.12,129.70 L296.80,129.70 L297.49,129.70 L298.17,129.70 L298.86,129.70 L299.54,129.71 L300.23,129.71 L300.91,129.71 L301.60,129.71 L302.28,129.72 L302.97,129.72 L303.65,129.72 L304.34,129.73 L305.02,129.73 L305.71,129.74 L306.39,129.74 L307.08,129.75 L307.76,129.75 L308.45,129.76 L309.13,129.77 L309.82,129.77 L310.50,129.78 L311.19,129.79 L311.87,129.80 L312.56,129.81 L313.24,129.82 L313.93,129.84 L314.61,129.85 L315.30,129.87 L315.98,129.89 L316.67,129.91 L317.35,129.93 L318.04,129.96 L318.72,130.00 L319.41,130.04 L320.09,130.08 L320.78,130.13 L321.46,130.20 L322.15,130.28 L322.83,130.37 L323.52,130.49 L324.13,130.62 L324.72,130.78 L325.29,130.98 L325.86,131.23 L326.39,131.53 L326.89,131.90 L327.32,132.32 L327.71,132.79 L328.05,133.32 L328.35,133.90 L328.60,134.50 L328.81,135.08 L328.99,135.70 L329.15,136.32 L329.29,136.94 L329.42,137.64 L329.54,138.30 L329.65,139.04 L329.74,139.70 L329.83,140.44 L329.90,141.04 L329.97,141.69 L330.04,142.40 L330.11,143.17 L330.18,144.00 L330.24,144.91 L330.29,145.57 L330.34,146.26 L330.38,147.00 L330.43,147.78 L330.47,148.61 L330.52,149.50 L330.56,150.45 L330.61,151.46 L330.66,152.54 L330.70,153.69 L330.72,154.30 L330.75,154.93 L330.77,155.58 L330.79,156.25 L330.81,156.94 L330.83,157.54 L330.85,158.17 L330.87,158.79 L330.89,159.39 L330.91,160.01 L330.92,160.62 L330.94,161.24 L330.96,161.84 L330.97,162.46 L330.99,163.10 L331.00,163.71 L331.02,164.34 L331.03,164.94 L331.05,165.56 L331.06,166.19 L331.07,166.79 L331.09,167.41 L331.10,168.04 L331.11,168.68 L331.13,169.29 L331.14,169.91 L331.15,170.55 L331.16,171.19 L331.17,171.81 L331.19,172.43 L331.20,173.06 L331.21,173.70 L331.22,174.31 L331.23,174.92 L331.24,175.54 L331.25,176.18 L331.26,176.82 L331.27,177.47 L331.28,178.08 L331.29,178.69 L331.30,179.32 L331.31,179.95 L331.32,180.59 L331.33,181.24 L331.34,181.87 L331.35,182.51 L331.36,183.12 L331.37,183.74 L331.38,184.37 L331.38,185.00 L331.39,185.65 L331.40,186.30 L331.41,186.95 L331.42,187.62 L331.43,188.22 L331.44,188.83 L331.44,189.45 L331.45,190.07 L331.46,190.69 L331.47,191.33 L331.48,191.96 L331.48,192.61 L331.49,193.25 L331.50,193.91 L331.51,194.57 L331.52,195.23 L331.52,195.86 L331.53,196.50 L331.54,197.10 L331.54,197.71 L331.55,198.32 L331.56,198.93 L331.57,199.55 L331.57,200.17 L331.58,200.79 L331.59,201.42 L331.59,202.05 L331.60,202.68 L331.61,203.31 L331.61,203.95 L331.62,204.59 L331.63,205.23 L331.64,205.87 L331.64,206.52 L331.65,207.16 L331.66,207.81 L331.66,208.46 L331.67,209.11 L331.68,209.76 L331.69,210.41 L331.69,211.06 L331.70,211.71 L331.71,212.37 L331.71,213.02 L331.72,213.67 L331.73,214.31 L331.73,214.96 L331.74,215.61 L331.75,216.25 L331.76,216.89 L331.76,217.53 L331.77,218.17 L331.78,218.80 L331.78,219.43 L331.79,220.05 L331.80,220.67 L331.81,221.29 L331.81,221.90 L331.82,222.51 L331.83,223.18 L331.84,223.85 L331.84,224.51 L331.85,225.15 L331.86,225.79 L331.87,226.42 L331.87,227.04 L331.88,227.65 L331.89,228.31 L331.90,228.96 L331.91,229.58 L331.92,230.20 L331.93,230.85 L331.94,231.48 L331.95,232.09 L331.96,232.72 L331.97,233.32 L331.98,233.94 L331.99,234.56 L332.01,235.18 L332.02,235.81 L332.04,236.42 L332.06,237.04 L332.09,237.65 L332.20,237.05 L332.22,236.44 L332.24,235.82 L332.25,235.20 L332.27,234.58 L332.28,233.96 L332.29,233.35 L332.30,232.75 L332.31,232.11 L332.32,231.51 L332.33,230.88 L332.34,230.23 L332.35,229.62 L332.36,228.99 L332.37,228.34 L332.38,227.68 L332.38,227.08 L332.39,226.46 L332.40,225.83 L332.41,225.19 L332.42,224.54 L332.42,223.88 L332.43,223.22 L332.44,222.54 L332.45,221.94 L332.45,221.33 L332.46,220.71 L332.47,220.09 L332.48,219.47 L332.48,218.84 L332.49,218.21 L332.50,217.57 L332.50,216.93 L332.51,216.29 L332.52,215.65 L332.53,215.00 L332.53,214.36 L332.54,213.71 L332.55,213.06 L332.55,212.41 L332.56,211.76 L332.57,211.11 L332.57,210.45 L332.58,209.80 L332.59,209.15 L332.60,208.54 L332.60,207.94 L332.61,207.29 L332.62,206.64 L332.62,206.00 L332.63,205.35 L332.64,204.71 L332.64,204.07 L332.65,203.43 L332.66,202.80 L332.67,202.17 L332.67,201.54 L332.68,200.91 L332.69,200.29 L332.69,199.67 L332.70,199.05 L332.71,198.44 L332.71,197.83 L332.72,197.22 L332.73,196.62 L332.74,195.94 L332.74,195.27 L332.75,194.61 L332.76,193.95 L332.77,193.30 L332.78,192.65 L332.78,192.00 L332.79,191.37 L332.80,190.73 L332.81,190.11 L332.82,189.49 L332.82,188.87 L332.83,188.26 L332.84,187.66 L332.85,186.99 L332.86,186.34 L332.87,185.69 L332.88,185.04 L332.88,184.41 L332.89,183.78 L332.90,183.16 L332.91,182.55 L332.92,181.94 L332.93,181.28 L332.94,180.64 L332.95,179.99 L332.96,179.36 L332.97,178.73 L332.98,178.12 L332.99,177.51 L333.00,176.86 L333.01,176.21 L333.02,175.58 L333.03,174.96 L333.04,174.34 L333.05,173.74 L333.06,173.09 L333.07,172.46 L333.09,171.84 L333.10,171.23 L333.11,170.63 L333.12,170.00 L333.13,169.37 L333.15,168.76 L333.16,168.15 L333.17,167.52 L333.18,166.91 L333.20,166.30 L333.21,165.67 L333.23,165.05 L333.24,164.44 L333.25,163.81 L333.27,163.20 L333.28,162.60 L333.30,161.97 L333.32,161.37 L333.33,160.74 L333.35,160.14 L333.37,159.51 L333.39,158.91 L333.40,158.28 L333.42,157.68 L333.44,157.07 L333.46,156.45 L333.49,155.75 L333.51,155.09 L333.53,154.46 L333.55,153.85 L333.60,152.69 L333.65,151.60 L333.69,150.58 L333.74,149.62 L333.78,148.73 L333.83,147.89 L333.87,147.10 L333.92,146.36 L333.96,145.66 L334.01,145.00 L334.06,144.38 L334.12,143.51 L334.19,142.72 L334.26,141.99 L334.33,141.31 L334.40,140.69 L334.48,140.01 L334.56,139.41 L334.65,138.78 L334.76,138.06 L334.88,137.43 L335.01,136.76 L335.15,136.17 L335.31,135.56 L335.49,134.97 L335.70,134.40 L335.95,133.82 L336.25,133.26 L336.59,132.74 L336.98,132.28 L337.43,131.85 L337.94,131.50 L338.48,131.19 L339.05,130.95 L339.63,130.76 L340.22,130.61 L340.81,130.48 L341.41,130.38 L342.02,130.29 L342.70,130.21 L343.39,130.15 L344.07,130.09 L344.76,130.04 L345.44,130.00 L346.13,129.97 L346.81,129.94 L347.50,129.92 L348.18,129.89 L348.87,129.87 L349.55,129.86 L350.24,129.84 L350.92,129.83 L351.61,129.81 L352.29,129.80 L352.98,129.79 L353.66,129.78 L354.35,129.78 L355.03,129.77 L355.72,129.76 L356.40,129.75 L357.09,129.75 L357.77,129.74 L358.46,129.74 L359.14,129.73 L359.83,129.73 L360.51,129.73 L361.20,129.72 L361.88,129.72 L362.57,129.72 L363.25,129.71 L363.94,129.71 L364.62,129.71 L365.31,129.71 L365.99,129.70 L366.68,129.70 L367.36,129.70 L368.05,129.70 L368.73,129.69 L369.42,129.69 L370.10,129.69 L370.79,129.69 L371.47,129.69 L372.16,129.69 L372.84,129.69 L373.53,129.68 L374.21,129.68 L374.90,129.68 L375.58,129.68 L376.27,129.68 L376.95,129.68 L377.64,129.68 L378.32,129.68 L379.01,129.68 L379.69,129.68 L380.38,129.68 L381.07,129.67 L381.75,129.67 L382.44,129.67 L383.12,129.67 L383.81,129.67 L384.49,129.67 L385.18,129.67 L385.86,129.67 L386.55,129.67 L387.23,129.67 L387.92,129.67 L388.60,129.67 L389.29,129.67 L389.97,129.67 L390.66,129.67 L391.34,129.67 L392.03,129.67 L392.71,129.67 L393.40,129.67 L394.08,129.67 L394.77,129.66 L395.45,129.66 L396.14,129.66 L396.82,129.66 L397.51,129.66 L398.19,129.66 L398.88,129.66 L399.56,129.66 L400.25,129.66 L400.93,129.66 L401.62,129.66 L402.30,129.66 L402.99,129.66 L403.67,129.66 L404.36,129.66 L405.04,129.66 L405.73,129.66 L406.41,129.66 L407.10,129.66 L407.78,129.66 L408.47,129.66 L409.15,129.66 L409.84,129.66 L410.52,129.66 L411.21,129.66 L411.89,129.66 L412.58,129.66 L413.26,129.66 L413.95,129.66 L414.63,129.66 L415.32,129.66 L416.00,129.66 L416.69,129.66 L417.37,129.66 L418.06,129.66 L418.74,129.66 L419.43,129.66 L420.11,129.66 L420.80,129.66 L421.48,129.66 L422.17,129.66 L422.85,129.66 L423.54,129.66 L424.22,129.66 L424.91,129.66 L425.59,129.66 L426.28,129.66 L426.96,129.66 L427.65,129.66 L428.34,129.66 L429.02,129.66 L429.71,129.66 L430.39,129.66 L431.08,129.66 L431.76,129.66 L432.45,129.66 L433.13,129.66 L433.82,129.66 L434.50,129.66 L435.19,129.66 L435.87,129.66 L436.56,129.66 L437.24,129.66 L437.93,129.66 L438.61,129.66 L439.30,129.66 L439.98,129.66 L440.67,129.66 L441.35,129.66 L442.04,129.66 L442.72,129.66 L443.41,129.66 L444.09,129.66 L444.78,129.66 L445.46,129.66 L446.15,129.66 L446.83,129.66 L447.52,129.66 L448.20,129.66 L448.89,129.66 L449.57,129.66 L450.26,129.66 L450.94,129.66 L451.63,129.66 L452.31,129.66 L453.00,129.66 L453.68,129.66 L454.37,129.66 L455.05,129.66 L455.74,129.66 L456.42,129.66 L457.11,129.66 L457.79,129.66 L458.48,129.66 L459.16,129.66 L459.85,129.66 L460.53,129.66 L461.22,129.66 L461.90,129.66 L462.59,129.66 L463.27,129.66 L463.96,129.66 L464.64,129.66 L465.33,129.66 L466.01,129.66 L466.70,129.66 L467.38,129.66 L468.07,129.66 L468.75,129.66 L469.44,129.66 L470.12,129.66 L470.81,129.66 L471.49,129.66 L472.18,129.66 L472.86,129.66 L473.55,129.66 L474.24,129.66 L474.92,129.66 L475.61,129.66 L476.29,129.66 L476.98,129.66 L477.66,129.66 L478.35,129.66 L479.03,129.66 L479.72,129.66 L480.40,129.66 L481.09,129.66 L481.77,129.66 L482.46,129.66 L483.14,129.66 L483.83,129.66 L484.51,129.66 L485.20,129.66 L485.88,129.66 L486.57,129.66 L487.25,129.66 L487.94,129.66 L488.62,129.66 L489.31,129.66 L489.99,129.66 L490.68,129.66 L491.36,129.66 L492.05,129.66 L492.73,129.66 L493.42,129.66 L494.10,129.66 L494.79,129.66 L495.47,129.66 L496.16,129.66 L496.50,129.66" fill="none" stroke="#00e000" stroke-width="1.35"/>
</g>
<line x1="68.5" y1="283.83" x2="496.5" y2="283.83" stroke="#9c9c9c" stroke-width="1" stroke-dasharray="3 3"/>
<line x1="68.5" y1="304.48" x2="496.5" y2="304.48" stroke="#9c9c9c" stroke-width="1" stroke-dasharray="3 3"/>
<line x1="68.5" y1="325.13" x2="496.5" y2="325.13" stroke="#9c9c9c" stroke-width="1" stroke-dasharray="3 3"/>
<line x1="68.5" y1="345.79" x2="496.5" y2="345.79" stroke="#9c9c9c" stroke-width="1" stroke-dasharray="3 3"/>
<line x1="68.5" y1="366.44" x2="496.5" y2="366.44" stroke="#9c9c9c" stroke-width="1" stroke-dasharray="3 3"/>
<line x1="68.5" y1="387.09" x2="496.5" y2="387.09" stroke="#9c9c9c" stroke-width="1" stroke-dasharray="3 3"/>
<line x1="68.5" y1="407.75" x2="496.5" y2="407.75" stroke="#9c9c9c" stroke-width="1" stroke-dasharray="3 3"/>
<line x1="103.33" y1="275.0" x2="103.33" y2="428.4" stroke="#9c9c9c" stroke-width="1" stroke-dasharray="3 3"/>
<line x1="123.71" y1="275.0" x2="123.71" y2="428.4" stroke="#9c9c9c" stroke-width="1" stroke-dasharray="3 3"/>
<line x1="138.16" y1="275.0" x2="138.16" y2="428.4" stroke="#9c9c9c" stroke-width="1" stroke-dasharray="3 3"/>
<line x1="149.38" y1="275.0" x2="149.38" y2="428.4" stroke="#9c9c9c" stroke-width="1" stroke-dasharray="3 3"/>
<line x1="158.54" y1="275.0" x2="158.54" y2="428.4" stroke="#9c9c9c" stroke-width="1" stroke-dasharray="3 3"/>
<line x1="166.28" y1="275.0" x2="166.28" y2="428.4" stroke="#9c9c9c" stroke-width="1" stroke-dasharray="3 3"/>
<line x1="172.99" y1="275.0" x2="172.99" y2="428.4" stroke="#9c9c9c" stroke-width="1" stroke-dasharray="3 3"/>
<line x1="178.91" y1="275.0" x2="178.91" y2="428.4" stroke="#9c9c9c" stroke-width="1" stroke-dasharray="3 3"/>
<line x1="184.21" y1="275.0" x2="184.21" y2="428.4" stroke="#9c9c9c" stroke-width="1" stroke-dasharray="3 3"/>
<line x1="219.04" y1="275.0" x2="219.04" y2="428.4" stroke="#9c9c9c" stroke-width="1" stroke-dasharray="3 3"/>
<line x1="239.41" y1="275.0" x2="239.41" y2="428.4" stroke="#9c9c9c" stroke-width="1" stroke-dasharray="3 3"/>
<line x1="253.87" y1="275.0" x2="253.87" y2="428.4" stroke="#9c9c9c" stroke-width="1" stroke-dasharray="3 3"/>
<line x1="265.08" y1="275.0" x2="265.08" y2="428.4" stroke="#9c9c9c" stroke-width="1" stroke-dasharray="3 3"/>
<line x1="274.25" y1="275.0" x2="274.25" y2="428.4" stroke="#9c9c9c" stroke-width="1" stroke-dasharray="3 3"/>
<line x1="281.99" y1="275.0" x2="281.99" y2="428.4" stroke="#9c9c9c" stroke-width="1" stroke-dasharray="3 3"/>
<line x1="288.70" y1="275.0" x2="288.70" y2="428.4" stroke="#9c9c9c" stroke-width="1" stroke-dasharray="3 3"/>
<line x1="294.62" y1="275.0" x2="294.62" y2="428.4" stroke="#9c9c9c" stroke-width="1" stroke-dasharray="3 3"/>
<line x1="299.92" y1="275.0" x2="299.92" y2="428.4" stroke="#9c9c9c" stroke-width="1" stroke-dasharray="3 3"/>
<line x1="334.75" y1="275.0" x2="334.75" y2="428.4" stroke="#9c9c9c" stroke-width="1" stroke-dasharray="3 3"/>
<line x1="355.12" y1="275.0" x2="355.12" y2="428.4" stroke="#9c9c9c" stroke-width="1" stroke-dasharray="3 3"/>
<line x1="369.58" y1="275.0" x2="369.58" y2="428.4" stroke="#9c9c9c" stroke-width="1" stroke-dasharray="3 3"/>
<line x1="380.79" y1="275.0" x2="380.79" y2="428.4" stroke="#9c9c9c" stroke-width="1" stroke-dasharray="3 3"/>
<line x1="389.95" y1="275.0" x2="389.95" y2="428.4" stroke="#9c9c9c" stroke-width="1" stroke-dasharray="3 3"/>
<line x1="397.70" y1="275.0" x2="397.70" y2="428.4" stroke="#9c9c9c" stroke-width="1" stroke-dasharray="3 3"/>
<line x1="404.41" y1="275.0" x2="404.41" y2="428.4" stroke="#9c9c9c" stroke-width="1" stroke-dasharray="3 3"/>
<line x1="410.33" y1="275.0" x2="410.33" y2="428.4" stroke="#9c9c9c" stroke-width="1" stroke-dasharray="3 3"/>
<line x1="415.62" y1="275.0" x2="415.62" y2="428.4" stroke="#9c9c9c" stroke-width="1" stroke-dasharray="3 3"/>
<line x1="450.46" y1="275.0" x2="450.46" y2="428.4" stroke="#9c9c9c" stroke-width="1" stroke-dasharray="3 3"/>
<line x1="470.83" y1="275.0" x2="470.83" y2="428.4" stroke="#9c9c9c" stroke-width="1" stroke-dasharray="3 3"/>
<line x1="485.29" y1="275.0" x2="485.29" y2="428.4" stroke="#9c9c9c" stroke-width="1" stroke-dasharray="3 3"/>
<rect x="68.5" y="273.5" width="428.0" height="154.89999999999998" fill="none" stroke="#b0b0b0" stroke-width="1"/>
<line x1="58.5" y1="283.83" x2="68.5" y2="283.83" stroke="#b0b0b0" stroke-width="1"/>
<text x="17.55" y="0" transform="translate(0 290.40) scale(1 1.15)" font-family='"Liberation Mono", monospace' font-size="13.4" font-weight="normal" fill="#c4c4c4" stroke="#c4c4c4" stroke-width="0.32" textLength="40.25" lengthAdjust="spacingAndGlyphs">&#x2013;20dB</text>
<line x1="58.5" y1="304.48" x2="68.5" y2="304.48" stroke="#b0b0b0" stroke-width="1"/>
<text x="17.55" y="0" transform="translate(0 311.06) scale(1 1.15)" font-family='"Liberation Mono", monospace' font-size="13.4" font-weight="normal" fill="#c4c4c4" stroke="#c4c4c4" stroke-width="0.32" textLength="40.25" lengthAdjust="spacingAndGlyphs">&#x2013;40dB</text>
<line x1="58.5" y1="325.13" x2="68.5" y2="325.13" stroke="#b0b0b0" stroke-width="1"/>
<text x="17.55" y="0" transform="translate(0 331.71) scale(1 1.15)" font-family='"Liberation Mono", monospace' font-size="13.4" font-weight="normal" fill="#c4c4c4" stroke="#c4c4c4" stroke-width="0.32" textLength="40.25" lengthAdjust="spacingAndGlyphs">&#x2013;60dB</text>
<line x1="58.5" y1="345.79" x2="68.5" y2="345.79" stroke="#b0b0b0" stroke-width="1"/>
<text x="17.55" y="0" transform="translate(0 352.36) scale(1 1.15)" font-family='"Liberation Mono", monospace' font-size="13.4" font-weight="normal" fill="#c4c4c4" stroke="#c4c4c4" stroke-width="0.32" textLength="40.25" lengthAdjust="spacingAndGlyphs">&#x2013;80dB</text>
<line x1="58.5" y1="366.44" x2="68.5" y2="366.44" stroke="#b0b0b0" stroke-width="1"/>
<text x="9.50" y="0" transform="translate(0 373.02) scale(1 1.15)" font-family='"Liberation Mono", monospace' font-size="13.4" font-weight="normal" fill="#c4c4c4" stroke="#c4c4c4" stroke-width="0.32" textLength="48.30" lengthAdjust="spacingAndGlyphs">&#x2013;100dB</text>
<line x1="58.5" y1="387.09" x2="68.5" y2="387.09" stroke="#b0b0b0" stroke-width="1"/>
<text x="9.50" y="0" transform="translate(0 393.67) scale(1 1.15)" font-family='"Liberation Mono", monospace' font-size="13.4" font-weight="normal" fill="#c4c4c4" stroke="#c4c4c4" stroke-width="0.32" textLength="48.30" lengthAdjust="spacingAndGlyphs">&#x2013;120dB</text>
<line x1="58.5" y1="407.75" x2="68.5" y2="407.75" stroke="#b0b0b0" stroke-width="1"/>
<text x="9.50" y="0" transform="translate(0 414.32) scale(1 1.15)" font-family='"Liberation Mono", monospace' font-size="13.4" font-weight="normal" fill="#c4c4c4" stroke="#c4c4c4" stroke-width="0.32" textLength="48.30" lengthAdjust="spacingAndGlyphs">&#x2013;140dB</text>
<line x1="58.5" y1="428.40" x2="68.5" y2="428.40" stroke="#b0b0b0" stroke-width="1"/>
<text x="9.50" y="0" transform="translate(0 434.98) scale(1 1.15)" font-family='"Liberation Mono", monospace' font-size="13.4" font-weight="normal" fill="#c4c4c4" stroke="#c4c4c4" stroke-width="0.32" textLength="48.30" lengthAdjust="spacingAndGlyphs">&#x2013;160dB</text>
<line x1="496.5" y1="283.83" x2="506.5" y2="283.83" stroke="#b0b0b0" stroke-width="1"/>
<text x="516.65" y="0" transform="translate(0 290.40) scale(1 1.15)" font-family='"Liberation Mono", monospace' font-size="13.4" font-weight="normal" fill="#c4c4c4" stroke="#c4c4c4" stroke-width="0.32" textLength="32.20" lengthAdjust="spacingAndGlyphs">200°</text>
<line x1="496.5" y1="304.48" x2="506.5" y2="304.48" stroke="#b0b0b0" stroke-width="1"/>
<text x="516.65" y="0" transform="translate(0 311.06) scale(1 1.15)" font-family='"Liberation Mono", monospace' font-size="13.4" font-weight="normal" fill="#c4c4c4" stroke="#c4c4c4" stroke-width="0.32" textLength="32.20" lengthAdjust="spacingAndGlyphs">120°</text>
<line x1="496.5" y1="325.13" x2="506.5" y2="325.13" stroke="#b0b0b0" stroke-width="1"/>
<text x="524.70" y="0" transform="translate(0 331.71) scale(1 1.15)" font-family='"Liberation Mono", monospace' font-size="13.4" font-weight="normal" fill="#c4c4c4" stroke="#c4c4c4" stroke-width="0.32" textLength="24.15" lengthAdjust="spacingAndGlyphs">40°</text>
<line x1="496.5" y1="345.79" x2="506.5" y2="345.79" stroke="#b0b0b0" stroke-width="1"/>
<text x="516.65" y="0" transform="translate(0 352.36) scale(1 1.15)" font-family='"Liberation Mono", monospace' font-size="13.4" font-weight="normal" fill="#c4c4c4" stroke="#c4c4c4" stroke-width="0.32" textLength="32.20" lengthAdjust="spacingAndGlyphs">&#x2013;40°</text>
<line x1="496.5" y1="366.44" x2="506.5" y2="366.44" stroke="#b0b0b0" stroke-width="1"/>
<text x="508.60" y="0" transform="translate(0 373.02) scale(1 1.15)" font-family='"Liberation Mono", monospace' font-size="13.4" font-weight="normal" fill="#c4c4c4" stroke="#c4c4c4" stroke-width="0.32" textLength="40.25" lengthAdjust="spacingAndGlyphs">&#x2013;120°</text>
<line x1="496.5" y1="387.09" x2="506.5" y2="387.09" stroke="#b0b0b0" stroke-width="1"/>
<text x="508.60" y="0" transform="translate(0 393.67) scale(1 1.15)" font-family='"Liberation Mono", monospace' font-size="13.4" font-weight="normal" fill="#c4c4c4" stroke="#c4c4c4" stroke-width="0.32" textLength="40.25" lengthAdjust="spacingAndGlyphs">&#x2013;200°</text>
<line x1="496.5" y1="407.75" x2="506.5" y2="407.75" stroke="#b0b0b0" stroke-width="1"/>
<text x="508.60" y="0" transform="translate(0 414.32) scale(1 1.15)" font-family='"Liberation Mono", monospace' font-size="13.4" font-weight="normal" fill="#c4c4c4" stroke="#c4c4c4" stroke-width="0.32" textLength="40.25" lengthAdjust="spacingAndGlyphs">&#x2013;280°</text>
<line x1="496.5" y1="428.40" x2="506.5" y2="428.40" stroke="#b0b0b0" stroke-width="1"/>
<text x="508.60" y="0" transform="translate(0 434.98) scale(1 1.15)" font-family='"Liberation Mono", monospace' font-size="13.4" font-weight="normal" fill="#c4c4c4" stroke="#c4c4c4" stroke-width="0.32" textLength="40.25" lengthAdjust="spacingAndGlyphs">&#x2013;360°</text>
<text x="231.80" y="0" transform="translate(0 269.98) scale(1 1.15)" font-family='"Liberation Mono", monospace' font-size="13.4" font-weight="bold" fill="#2020f0" stroke="#2020f0" stroke-width="0.1" textLength="100.20" lengthAdjust="spacingAndGlyphs">V(adc_txref)</text>
<g clip-path="url(#cp1)">
<path d="M68.50,312.15 L69.19,312.16 L69.87,312.16 L70.56,312.17 L71.24,312.17 L71.93,312.18 L72.61,312.18 L73.30,312.19 L73.98,312.19 L74.67,312.20 L75.35,312.21 L76.04,312.21 L76.72,312.22 L77.41,312.22 L78.09,312.23 L78.78,312.23 L79.46,312.24 L80.15,312.24 L80.83,312.25 L81.52,312.25 L82.20,312.26 L82.89,312.27 L83.57,312.27 L84.26,312.28 L84.94,312.28 L85.63,312.29 L86.31,312.29 L87.00,312.30 L87.68,312.30 L88.37,312.31 L89.05,312.32 L89.74,312.32 L90.42,312.33 L91.11,312.33 L91.79,312.34 L92.48,312.35 L93.16,312.35 L93.85,312.36 L94.53,312.36 L95.22,312.37 L95.90,312.38 L96.59,312.38 L97.27,312.39 L97.96,312.39 L98.64,312.40 L99.33,312.41 L100.01,312.41 L100.70,312.42 L101.38,312.43 L102.07,312.43 L102.75,312.44 L103.44,312.45 L104.12,312.45 L104.81,312.46 L105.49,312.47 L106.18,312.48 L106.86,312.48 L107.55,312.49 L108.23,312.50 L108.92,312.51 L109.60,312.51 L110.29,312.52 L110.97,312.53 L111.66,312.54 L112.34,312.55 L113.03,312.55 L113.71,312.56 L114.40,312.57 L115.09,312.58 L115.77,312.59 L116.46,312.60 L117.14,312.61 L117.83,312.62 L118.51,312.63 L119.20,312.64 L119.88,312.65 L120.57,312.66 L121.25,312.67 L121.94,312.68 L122.62,312.69 L123.31,312.70 L123.99,312.71 L124.68,312.73 L125.36,312.74 L126.05,312.75 L126.73,312.76 L127.42,312.78 L128.10,312.79 L128.79,312.80 L129.47,312.82 L130.16,312.83 L130.84,312.85 L131.53,312.86 L132.21,312.88 L132.90,312.90 L133.58,312.91 L134.27,312.93 L134.95,312.95 L135.64,312.97 L136.32,312.99 L137.01,313.01 L137.69,313.03 L138.38,313.06 L139.06,313.08 L139.75,313.10 L140.43,313.13 L141.12,313.15 L141.80,313.18 L142.49,313.21 L143.17,313.24 L143.86,313.27 L144.54,313.31 L145.23,313.34 L145.91,313.38 L146.60,313.42 L147.28,313.46 L147.97,313.51 L148.65,313.56 L149.34,313.61 L150.02,313.66 L150.71,313.72 L151.39,313.78 L152.08,313.85 L152.76,313.92 L153.45,314.00 L154.13,314.08 L154.82,314.18 L155.50,314.28 L156.19,314.39 L156.87,314.52 L157.56,314.66 L158.24,314.82 L158.84,314.97 L159.43,315.14 L160.02,315.33 L160.60,315.55 L161.16,315.78 L161.73,316.05 L162.26,316.34 L162.77,316.66 L163.26,317.02 L163.71,317.41 L164.15,317.83 L164.56,318.30 L164.92,318.79 L165.27,319.31 L165.58,319.86 L165.86,320.42 L166.11,320.99 L166.34,321.58 L166.55,322.15 L166.75,322.79 L166.93,323.41 L167.11,324.08 L167.26,324.72 L167.41,325.40 L167.54,326.01 L167.66,326.64 L167.80,327.35 L167.92,328.08 L168.02,328.70 L168.13,329.34 L168.23,330.01 L168.33,330.70 L168.43,331.42 L168.52,332.05 L168.61,332.71 L168.69,333.32 L168.79,334.05 L168.89,334.83 L168.99,335.61 L169.10,336.39 L169.20,337.17 L169.30,337.93 L169.40,338.68 L169.50,339.42 L169.61,340.13 L169.71,340.83 L169.81,341.50 L169.91,342.14 L170.01,342.76 L170.12,343.35 L170.23,344.00 L170.37,344.72 L170.50,345.34 L170.65,346.03 L170.80,346.67 L170.96,347.27 L171.14,347.90 L171.31,348.48 L171.52,349.09 L171.75,349.69 L172.00,350.29 L172.28,350.88 L172.59,351.43 L172.92,351.96 L173.28,352.45 L173.69,352.94 L174.12,353.38 L174.58,353.79 L175.06,354.16 L175.57,354.49 L176.11,354.79 L176.67,355.07 L177.23,355.31 L177.82,355.53 L178.40,355.72 L179.14,355.93 L179.82,356.11 L180.51,356.26 L181.19,356.40 L181.88,356.52 L182.56,356.63 L183.25,356.73 L183.93,356.83 L184.62,356.91 L185.31,356.99 L185.99,357.06 L186.68,357.12 L187.36,357.19 L188.05,357.24 L188.73,357.30 L189.42,357.35 L190.10,357.39 L190.79,357.44 L191.47,357.48 L192.16,357.52 L192.84,357.56 L193.53,357.59 L194.21,357.62 L194.90,357.66 L195.58,357.69 L196.27,357.71 L196.95,357.74 L197.64,357.77 L198.32,357.79 L199.01,357.82 L199.69,357.84 L200.38,357.86 L201.06,357.88 L201.75,357.90 L202.43,357.92 L203.12,357.94 L203.80,357.96 L204.49,357.98 L205.17,357.99 L205.86,358.01 L206.54,358.03 L207.23,358.04 L207.91,358.06 L208.60,358.07 L209.28,358.09 L209.97,358.10 L210.65,358.11 L211.34,358.13 L212.02,358.14 L212.71,358.15 L213.39,358.16 L214.08,358.17 L214.76,358.19 L215.45,358.20 L216.13,358.21 L216.82,358.22 L217.50,358.23 L218.19,358.24 L218.87,358.25 L219.56,358.26 L220.24,358.27 L220.93,358.28 L221.61,358.28 L222.30,358.29 L222.98,358.30 L223.67,358.31 L224.35,358.32 L225.04,358.33 L225.72,358.33 L226.41,358.34 L227.09,358.35 L227.78,358.36 L228.46,358.37 L229.15,358.37 L229.83,358.38 L230.52,358.39 L231.21,358.39 L231.89,358.40 L232.58,358.41 L233.26,358.41 L233.95,358.42 L234.63,358.43 L235.32,358.43 L236.00,358.44 L236.69,358.45 L237.37,358.45 L238.06,358.46 L238.74,358.46 L239.43,358.47 L240.11,358.48 L240.80,358.48 L241.48,358.49 L242.17,358.49 L242.85,358.50 L243.54,358.50 L244.22,358.51 L244.91,358.51 L245.59,358.52 L246.28,358.52 L246.96,358.53 L247.65,358.54 L248.33,358.54 L249.02,358.55 L249.70,358.55 L250.39,358.56 L251.07,358.56 L251.76,358.57 L252.44,358.57 L253.13,358.58 L253.81,358.58 L254.50,358.59 L255.18,358.59 L255.87,358.59 L256.55,358.60 L257.24,358.60 L257.92,358.61 L258.61,358.61 L259.29,358.62 L259.98,358.62 L260.66,358.63 L261.35,358.63 L262.03,358.64 L262.72,358.64 L263.40,358.65 L264.09,358.65 L264.77,358.66 L265.46,358.66 L266.14,358.67 L266.83,358.67 L267.51,358.68 L268.20,358.68 L268.88,358.68 L269.57,358.69 L270.25,358.69 L270.94,358.70 L271.62,358.70 L272.31,358.71 L272.99,358.71 L273.68,358.72 L274.36,358.72 L275.05,358.73 L275.73,358.73 L276.42,358.74 L277.11,358.74 L277.79,358.75 L278.48,358.75 L279.16,358.76 L279.85,358.76 L280.53,358.77 L281.22,358.77 L281.90,358.78 L282.59,358.79 L283.27,358.79 L283.96,358.80 L284.64,358.80 L285.33,358.81 L286.01,358.81 L286.70,358.82 L287.38,358.83 L288.07,358.83 L288.75,358.84 L289.44,358.85 L290.12,358.85 L290.81,358.86 L291.49,358.87 L292.18,358.87 L292.86,358.88 L293.55,358.89 L294.23,358.90 L294.92,358.90 L295.60,358.91 L296.29,358.92 L296.97,358.93 L297.66,358.94 L298.34,358.95 L299.03,358.96 L299.71,358.97 L300.40,358.98 L301.08,358.99 L301.77,359.00 L302.45,359.01 L303.14,359.02 L303.82,359.03 L304.51,359.04 L305.19,359.06 L305.88,359.07 L306.56,359.08 L307.25,359.10 L307.93,359.11 L308.62,359.13 L309.30,359.15 L309.99,359.17 L310.67,359.19 L311.36,359.21 L312.04,359.23 L312.73,359.25 L313.41,359.28 L314.10,359.30 L314.78,359.33 L315.47,359.36 L316.15,359.40 L316.84,359.43 L317.52,359.47 L318.21,359.51 L318.89,359.56 L319.58,359.61 L320.26,359.67 L320.95,359.74 L321.63,359.81 L322.32,359.89 L323.01,359.99 L323.60,360.09 L324.20,360.19 L324.79,360.32 L325.38,360.47 L325.98,360.64 L326.55,360.85 L327.12,361.09 L327.67,361.39 L328.17,361.73 L328.65,362.14 L329.06,362.59 L329.42,363.09 L329.74,363.65 L330.02,364.24 L330.24,364.84 L330.43,365.42 L330.59,366.02 L330.72,366.61 L330.84,367.20 L330.95,367.79 L331.04,368.38 L331.13,368.98 L331.21,369.58 L331.28,370.18 L331.35,370.78 L331.41,371.38 L331.47,371.98 L331.52,372.58 L331.57,373.19 L331.62,373.80 L331.66,374.40 L331.71,375.01 L331.75,375.62 L331.79,376.22 L331.83,376.83 L331.87,377.44 L331.91,378.04 L331.94,378.64 L331.98,379.25 L332.01,379.86 L332.05,380.47 L332.08,381.07 L332.12,381.68 L332.15,382.29 L332.19,382.89 L332.22,383.49 L332.26,384.10 L332.29,384.71 L332.33,385.32 L332.37,385.93 L332.40,386.54 L332.44,387.15 L332.48,387.76 L332.52,388.37 L332.57,388.97 L332.61,389.56 L332.66,390.17 L332.71,390.78 L332.76,391.38 L332.81,391.98 L332.87,392.59 L332.93,393.19 L333.00,393.79 L333.08,394.39 L333.16,394.99 L333.25,395.59 L333.35,396.18 L333.46,396.77 L333.60,397.44 L333.76,398.08 L333.94,398.70 L334.15,399.29 L334.40,399.88 L334.70,400.45 L335.04,400.97 L335.43,401.44 L335.86,401.85 L336.34,402.21 L336.86,402.53 L337.41,402.80 L337.98,403.02 L338.55,403.21 L339.15,403.37 L339.74,403.51 L340.33,403.62 L340.93,403.73 L341.52,403.82 L342.19,403.90 L342.87,403.98 L343.56,404.05 L344.24,404.12 L344.93,404.17 L345.61,404.22 L346.30,404.27 L346.98,404.31 L347.67,404.35 L348.35,404.38 L349.04,404.41 L349.72,404.44 L350.41,404.47 L351.09,404.49 L351.78,404.52 L352.46,404.54 L353.15,404.56 L353.83,404.58 L354.52,404.60 L355.20,404.62 L355.89,404.63 L356.57,404.65 L357.26,404.66 L357.94,404.68 L358.63,404.69 L359.31,404.70 L360.00,404.72 L360.68,404.73 L361.37,404.74 L362.05,404.75 L362.74,404.76 L363.42,404.77 L364.11,404.78 L364.79,404.79 L365.48,404.80 L366.16,404.80 L366.85,404.81 L367.53,404.82 L368.22,404.83 L368.90,404.83 L369.59,404.84 L370.28,404.85 L370.96,404.85 L371.65,404.86 L372.33,404.87 L373.02,404.87 L373.70,404.88 L374.39,404.88 L375.07,404.89 L375.76,404.89 L376.44,404.90 L377.13,404.90 L377.81,404.91 L378.50,404.91 L379.18,404.92 L379.87,404.92 L380.55,404.93 L381.24,404.93 L381.92,404.94 L382.61,404.94 L383.29,404.94 L383.98,404.95 L384.66,404.95 L385.35,404.95 L386.03,404.96 L386.72,404.96 L387.40,404.96 L388.09,404.97 L388.77,404.97 L389.46,404.97 L390.14,404.98 L390.83,404.98 L391.51,404.98 L392.20,404.99 L392.88,404.99 L393.57,404.99 L394.25,405.00 L394.94,405.00 L395.62,405.00 L396.31,405.00 L396.99,405.01 L397.68,405.01 L398.36,405.01 L399.05,405.01 L399.73,405.02 L400.42,405.02 L401.10,405.02 L401.79,405.02 L402.47,405.02 L403.16,405.03 L403.84,405.03 L404.53,405.03 L405.21,405.03 L405.90,405.03 L406.58,405.04 L407.27,405.04 L407.95,405.04 L408.64,405.04 L409.32,405.04 L410.01,405.05 L410.69,405.05 L411.38,405.05 L412.06,405.05 L412.75,405.05 L413.43,405.05 L414.12,405.06 L414.80,405.06 L415.49,405.06 L416.18,405.06 L416.86,405.06 L417.55,405.06 L418.23,405.06 L418.92,405.07 L419.60,405.07 L420.29,405.07 L420.97,405.07 L421.66,405.07 L422.34,405.07 L423.03,405.07 L423.71,405.08 L424.40,405.08 L425.08,405.08 L425.77,405.08 L426.45,405.08 L427.14,405.08 L427.82,405.08 L428.51,405.08 L429.19,405.09 L429.88,405.09 L430.56,405.09 L431.25,405.09 L431.93,405.09 L432.62,405.09 L433.30,405.09 L433.99,405.09 L434.67,405.09 L435.36,405.09 L436.04,405.10 L436.73,405.10 L437.41,405.10 L438.10,405.10 L438.78,405.10 L439.47,405.10 L440.15,405.10 L440.84,405.10 L441.52,405.10 L442.21,405.10 L442.89,405.10 L443.58,405.11 L444.26,405.11 L444.95,405.11 L445.63,405.11 L446.32,405.11 L447.00,405.11 L447.69,405.11 L448.37,405.11 L449.06,405.11 L449.74,405.11 L450.43,405.11 L451.11,405.11 L451.80,405.11 L452.48,405.12 L453.17,405.12 L453.85,405.12 L454.54,405.12 L455.22,405.12 L455.91,405.12 L456.59,405.12 L457.28,405.12 L457.96,405.12 L458.65,405.12 L459.33,405.12 L460.02,405.12 L460.70,405.12 L461.39,405.12 L462.08,405.12 L462.76,405.12 L463.45,405.13 L464.13,405.13 L464.82,405.13 L465.50,405.13 L466.19,405.13 L466.87,405.13 L467.56,405.13 L468.24,405.13 L468.93,405.13 L469.61,405.13 L470.30,405.13 L470.98,405.13 L471.67,405.13 L472.35,405.13 L473.04,405.13 L473.72,405.13 L474.41,405.13 L475.09,405.13 L475.78,405.13 L476.46,405.13 L477.15,405.13 L477.83,405.14 L478.52,405.14 L479.20,405.14 L479.89,405.14 L480.57,405.14 L481.26,405.14 L481.94,405.14 L482.63,405.14 L483.31,405.14 L484.00,405.14 L484.68,405.14 L485.37,405.14 L486.05,405.14 L486.74,405.14 L487.42,405.14 L488.11,405.14 L488.79,405.14 L489.48,405.14 L490.16,405.14 L490.85,405.14 L491.53,405.14 L492.22,405.14 L492.90,405.14 L493.59,405.14 L494.27,405.14 L494.96,405.14 L495.64,405.14 L496.33,405.14 L496.50,405.14" fill="none" stroke="#2020f0" stroke-width="1.35" stroke-dasharray="3.5 2.5"/>
<path d="M68.50,319.14 L69.19,319.01 L69.87,318.88 L70.56,318.76 L71.24,318.63 L71.93,318.50 L72.61,318.37 L73.30,318.25 L73.98,318.12 L74.67,317.99 L75.35,317.86 L76.04,317.73 L76.72,317.61 L77.41,317.48 L78.09,317.35 L78.78,317.22 L79.46,317.09 L80.15,316.96 L80.83,316.83 L81.52,316.70 L82.20,316.57 L82.89,316.44 L83.57,316.31 L84.26,316.18 L84.94,316.05 L85.63,315.92 L86.31,315.78 L87.00,315.65 L87.68,315.52 L88.37,315.39 L89.05,315.25 L89.74,315.12 L90.42,314.99 L91.11,314.85 L91.79,314.72 L92.48,314.59 L93.16,314.45 L93.85,314.32 L94.53,314.18 L95.22,314.05 L95.90,313.91 L96.59,313.77 L97.27,313.64 L97.96,313.50 L98.64,313.36 L99.33,313.22 L100.01,313.08 L100.70,312.94 L101.38,312.80 L102.07,312.66 L102.75,312.52 L103.44,312.38 L104.12,312.24 L104.81,312.10 L105.49,311.95 L106.18,311.81 L106.86,311.67 L107.55,311.52 L108.23,311.37 L108.92,311.23 L109.60,311.08 L110.29,310.93 L110.97,310.78 L111.66,310.63 L112.34,310.48 L113.03,310.33 L113.71,310.18 L114.40,310.03 L115.09,309.87 L115.77,309.72 L116.46,309.56 L117.14,309.40 L117.83,309.25 L118.51,309.09 L119.20,308.93 L119.88,308.76 L120.57,308.60 L121.25,308.44 L121.94,308.27 L122.62,308.10 L123.31,307.93 L123.99,307.76 L124.68,307.59 L125.36,307.42 L126.05,307.24 L126.73,307.07 L127.42,306.89 L128.10,306.71 L128.79,306.52 L129.47,306.34 L130.16,306.15 L130.84,305.96 L131.53,305.77 L132.21,305.58 L132.90,305.38 L133.58,305.18 L134.27,304.98 L134.95,304.77 L135.64,304.56 L136.32,304.35 L137.01,304.14 L137.69,303.92 L138.38,303.69 L139.06,303.47 L139.75,303.24 L140.43,303.00 L141.12,302.76 L141.80,302.52 L142.49,302.27 L143.17,302.01 L143.86,301.75 L144.54,301.49 L145.23,301.22 L145.91,300.94 L146.60,300.65 L147.28,300.35 L147.97,300.05 L148.65,299.74 L149.34,299.42 L150.02,299.09 L150.71,298.75 L151.39,298.39 L152.08,298.03 L152.76,297.65 L153.45,297.25 L154.13,296.84 L154.65,296.52 L155.16,296.19 L155.68,295.85 L156.19,295.49 L156.70,295.13 L157.22,294.75 L157.73,294.35 L158.24,293.94 L158.72,293.54 L159.18,293.14 L159.63,292.72 L160.09,292.28 L160.53,291.85 L160.96,291.40 L161.37,290.95 L161.78,290.48 L162.18,289.99 L162.57,289.51 L162.95,289.00 L163.31,288.51 L163.66,287.99 L164.00,287.48 L164.33,286.94 L164.63,286.43 L164.94,285.88 L165.24,285.32 L165.53,284.77 L165.81,284.20 L166.09,283.61 L166.34,283.05 L166.60,282.48 L166.85,281.89 L167.11,281.30 L167.36,280.71 L167.62,280.14 L167.90,279.56 L168.20,279.01 L168.59,278.52 L169.17,278.39 L169.63,278.84 L169.96,279.39 L170.23,279.94 L170.50,280.52 L170.75,281.09 L171.01,281.70 L171.26,282.28 L171.52,282.86 L171.77,283.42 L172.03,283.97 L172.31,284.55 L172.59,285.10 L172.87,285.63 L173.18,286.18 L173.48,286.71 L173.81,287.26 L174.14,287.77 L174.50,288.31 L174.86,288.81 L175.22,289.29 L175.60,289.79 L175.98,290.25 L176.39,290.73 L176.80,291.19 L177.23,291.65 L177.66,292.09 L178.10,292.51 L178.56,292.93 L179.14,293.45 L179.65,293.88 L180.17,294.30 L180.68,294.70 L181.19,295.08 L181.71,295.45 L182.22,295.80 L182.74,296.14 L183.25,296.47 L183.76,296.79 L184.28,297.10 L184.96,297.50 L185.65,297.89 L186.33,298.26 L187.02,298.61 L187.70,298.96 L188.39,299.29 L189.07,299.61 L189.76,299.93 L190.44,300.23 L191.13,300.53 L191.81,300.82 L192.50,301.10 L193.18,301.37 L193.87,301.64 L194.55,301.90 L195.24,302.16 L195.92,302.41 L196.61,302.65 L197.29,302.89 L197.98,303.12 L198.66,303.36 L199.35,303.58 L200.03,303.80 L200.72,304.02 L201.40,304.24 L202.09,304.45 L202.77,304.66 L203.46,304.86 L204.14,305.06 L204.83,305.26 L205.51,305.46 L206.20,305.65 L206.88,305.84 L207.57,306.03 L208.26,306.22 L208.94,306.40 L209.63,306.58 L210.31,306.76 L211.00,306.94 L211.68,307.11 L212.37,307.29 L213.05,307.46 L213.74,307.63 L214.42,307.80 L215.11,307.97 L215.79,308.13 L216.48,308.30 L217.16,308.46 L217.85,308.62 L218.53,308.78 L219.22,308.94 L219.90,309.09 L220.59,309.25 L221.27,309.40 L221.96,309.56 L222.64,309.71 L223.33,309.86 L224.01,310.01 L224.70,310.16 L225.38,310.31 L226.07,310.46 L226.75,310.60 L227.44,310.75 L228.12,310.89 L228.81,311.03 L229.49,311.18 L230.18,311.32 L230.86,311.46 L231.55,311.60 L232.23,311.74 L232.92,311.88 L233.60,312.02 L234.29,312.15 L234.97,312.29 L235.66,312.42 L236.34,312.56 L237.03,312.69 L237.71,312.83 L238.40,312.96 L239.08,313.09 L239.77,313.22 L240.45,313.36 L241.14,313.49 L241.82,313.62 L242.51,313.75 L243.19,313.87 L243.88,314.00 L244.56,314.13 L245.25,314.26 L245.93,314.38 L246.62,314.51 L247.30,314.63 L247.99,314.76 L248.67,314.88 L249.36,315.01 L250.04,315.13 L250.73,315.25 L251.41,315.37 L252.10,315.49 L252.78,315.62 L253.47,315.74 L254.16,315.86 L254.84,315.97 L255.53,316.09 L256.21,316.21 L256.90,316.33 L257.58,316.44 L258.27,316.56 L258.95,316.68 L259.64,316.79 L260.32,316.91 L261.01,317.02 L261.69,317.13 L262.38,317.24 L263.06,317.36 L263.75,317.47 L264.43,317.58 L265.12,317.69 L265.80,317.80 L266.49,317.91 L267.17,318.01 L267.86,318.12 L268.54,318.23 L269.23,318.33 L269.91,318.44 L270.60,318.54 L271.28,318.64 L271.97,318.75 L272.65,318.85 L273.34,318.95 L274.02,319.05 L274.71,319.15 L275.39,319.24 L276.08,319.34 L276.76,319.44 L277.45,319.53 L278.13,319.63 L278.82,319.72 L279.50,319.81 L280.19,319.90 L280.87,319.99 L281.56,320.08 L282.24,320.16 L282.93,320.25 L283.61,320.33 L284.30,320.42 L284.98,320.50 L285.67,320.58 L286.35,320.66 L287.04,320.73 L287.72,320.81 L288.41,320.88 L289.09,320.95 L289.78,321.02 L290.46,321.09 L291.15,321.16 L291.83,321.22 L292.52,321.28 L293.20,321.34 L293.89,321.40 L294.57,321.45 L295.26,321.50 L295.94,321.55 L296.63,321.60 L297.31,321.64 L298.00,321.68 L298.68,321.72 L299.37,321.76 L300.06,321.79 L300.74,321.81 L301.43,321.84 L302.11,321.86 L302.80,321.87 L303.48,321.88 L304.17,321.89 L304.85,321.89 L305.54,321.89 L306.22,321.88 L306.91,321.86 L307.59,321.84 L308.28,321.81 L308.96,321.78 L309.65,321.74 L310.33,321.69 L311.02,321.63 L311.70,321.56 L312.39,321.49 L313.07,321.40 L313.76,321.30 L314.44,321.20 L315.13,321.07 L315.81,320.94 L316.50,320.79 L317.18,320.62 L317.87,320.43 L318.55,320.23 L319.24,320.00 L319.92,319.75 L320.61,319.47 L321.29,319.16 L321.98,318.81 L322.66,318.43 L323.18,318.11 L323.69,317.76 L324.20,317.39 L324.68,317.00 L325.13,316.60 L325.57,316.18 L326.00,315.74 L326.41,315.27 L326.80,314.79 L327.16,314.30 L327.51,313.80 L327.85,313.26 L328.17,312.70 L328.46,312.14 L328.74,311.58 L328.99,311.02 L329.24,310.41 L329.47,309.82 L329.67,309.24 L329.88,308.62 L330.06,308.03 L330.24,307.39 L330.40,306.79 L330.56,306.16 L330.71,305.53 L330.84,304.95 L330.97,304.36 L331.09,303.77 L331.21,303.18 L331.33,302.59 L331.45,302.00 L331.58,301.41 L331.71,300.83 L331.89,300.25 L332.41,300.56 L332.55,301.15 L332.67,301.74 L332.78,302.33 L332.89,302.92 L332.99,303.52 L333.09,304.11 L333.20,304.70 L333.31,305.30 L333.42,305.89 L333.55,306.58 L333.69,307.25 L333.83,307.90 L333.96,308.51 L334.10,309.10 L334.26,309.76 L334.42,310.38 L334.58,310.98 L334.76,311.63 L334.95,312.24 L335.13,312.83 L335.33,313.45 L335.54,314.05 L335.74,314.62 L335.97,315.23 L336.20,315.81 L336.45,316.41 L336.70,316.99 L336.95,317.55 L337.22,318.11 L337.50,318.69 L337.78,319.22 L338.07,319.78 L338.37,320.32 L338.69,320.87 L339.01,321.41 L339.33,321.93 L339.67,322.47 L340.01,322.99 L340.36,323.49 L340.72,324.01 L341.09,324.51 L341.45,325.00 L341.84,325.52 L342.36,326.16 L342.87,326.79 L343.39,327.40 L343.90,327.99 L344.41,328.56 L344.93,329.12 L345.44,329.66 L345.95,330.19 L346.47,330.71 L346.98,331.22 L347.50,331.71 L348.01,332.20 L348.52,332.68 L349.04,333.15 L349.55,333.61 L350.07,334.06 L350.58,334.51 L351.09,334.95 L351.61,335.39 L352.12,335.81 L352.63,336.24 L353.15,336.65 L353.66,337.07 L354.18,337.48 L354.69,337.88 L355.20,338.28 L355.72,338.67 L356.23,339.06 L356.74,339.45 L357.26,339.83 L357.77,340.21 L358.29,340.59 L358.80,340.96 L359.31,341.33 L359.83,341.70 L360.34,342.07 L360.86,342.43 L361.37,342.79 L361.88,343.15 L362.40,343.50 L362.91,343.85 L363.42,344.20 L363.94,344.55 L364.45,344.90 L364.97,345.24 L365.48,345.58 L365.99,345.93 L366.51,346.26 L367.02,346.60 L367.53,346.94 L368.05,347.27 L368.56,347.60 L369.08,347.93 L369.59,348.26 L370.10,348.59 L370.62,348.92 L371.13,349.24 L371.65,349.56 L372.16,349.89 L372.67,350.21 L373.19,350.53 L373.70,350.85 L374.21,351.17 L374.73,351.48 L375.24,351.80 L375.76,352.11 L376.27,352.43 L376.78,352.74 L377.30,353.05 L377.81,353.36 L378.32,353.67 L379.01,354.09 L379.69,354.50 L380.38,354.91 L381.07,355.31 L381.75,355.72 L382.44,356.13 L383.12,356.53 L383.81,356.93 L384.49,357.34 L385.18,357.74 L385.86,358.14 L386.55,358.54 L387.23,358.94 L387.92,359.33 L388.60,359.73 L389.29,360.12 L389.97,360.52 L390.66,360.91 L391.34,361.30 L392.03,361.70 L392.71,362.09 L393.40,362.48 L394.08,362.87 L394.77,363.26 L395.45,363.65 L396.14,364.03 L396.82,364.42 L397.51,364.81 L398.19,365.19 L398.88,365.58 L399.56,365.97 L400.25,366.35 L400.93,366.73 L401.62,367.12 L402.30,367.50 L402.99,367.88 L403.67,368.27 L404.36,368.65 L405.04,369.03 L405.73,369.41 L406.41,369.79 L407.10,370.17 L407.78,370.55 L408.47,370.93 L409.15,371.31 L409.84,371.69 L410.52,372.06 L411.21,372.44 L411.89,372.82 L412.58,373.20 L413.26,373.57 L413.95,373.95 L414.63,374.33 L415.32,374.70 L416.00,375.08 L416.69,375.46 L417.37,375.83 L418.06,376.21 L418.74,376.58 L419.43,376.96 L420.11,377.33 L420.80,377.71 L421.48,378.08 L422.17,378.45 L422.85,378.83 L423.54,379.20 L424.22,379.57 L424.91,379.95 L425.59,380.32 L426.28,380.69 L426.96,381.07 L427.65,381.44 L428.34,381.81 L429.02,382.18 L429.71,382.56 L430.39,382.93 L431.08,383.30 L431.76,383.67 L432.45,384.04 L433.13,384.41 L433.82,384.78 L434.50,385.16 L435.19,385.53 L435.87,385.90 L436.56,386.27 L437.24,386.64 L437.93,387.01 L438.61,387.38 L439.30,387.75 L439.98,388.12 L440.67,388.49 L441.35,388.86 L442.04,389.23 L442.72,389.60 L443.41,389.97 L444.09,390.34 L444.78,390.71 L445.46,391.08 L446.15,391.45 L446.83,391.82 L447.52,392.19 L448.20,392.56 L448.89,392.93 L449.57,393.30 L450.26,393.67 L450.94,394.03 L451.63,394.40 L452.31,394.77 L453.00,395.14 L453.68,395.51 L454.37,395.88 L455.05,396.25 L455.74,396.62 L456.42,396.98 L457.11,397.35 L457.79,397.72 L458.48,398.09 L459.16,398.46 L459.85,398.83 L460.53,399.20 L461.22,399.56 L461.90,399.93 L462.59,400.30 L463.27,400.67 L463.96,401.04 L464.64,401.41 L465.33,401.77 L466.01,402.14 L466.70,402.51 L467.38,402.88 L468.07,403.25 L468.75,403.61 L469.44,403.98 L470.12,404.35 L470.81,404.72 L471.49,405.08 L472.18,405.45 L472.86,405.82 L473.55,406.19 L474.24,406.56 L474.92,406.92 L475.61,407.29 L476.29,407.66 L476.98,408.03 L477.66,408.39 L478.35,408.76 L479.03,409.13 L479.72,409.50 L480.40,409.86 L481.09,410.23 L481.77,410.60 L482.46,410.97 L483.14,411.33 L483.83,411.70 L484.51,412.07 L485.20,412.44 L485.88,412.80 L486.57,413.17 L487.25,413.54 L487.94,413.91 L488.62,414.27 L489.31,414.64 L489.99,415.01 L490.68,415.38 L491.36,415.74 L492.05,416.11 L492.73,416.48 L493.42,416.84 L494.10,417.21 L494.79,417.58 L495.47,417.95 L496.16,418.31 L496.50,418.50" fill="none" stroke="#2020f0" stroke-width="1.35"/>
</g>
<line x1="68.5" y1="474.25" x2="496.5" y2="474.25" stroke="#9c9c9c" stroke-width="1" stroke-dasharray="3 3"/>
<line x1="68.5" y1="500.00" x2="496.5" y2="500.00" stroke="#9c9c9c" stroke-width="1" stroke-dasharray="3 3"/>
<line x1="68.5" y1="525.75" x2="496.5" y2="525.75" stroke="#9c9c9c" stroke-width="1" stroke-dasharray="3 3"/>
<line x1="68.5" y1="551.50" x2="496.5" y2="551.50" stroke="#9c9c9c" stroke-width="1" stroke-dasharray="3 3"/>
<line x1="68.5" y1="577.25" x2="496.5" y2="577.25" stroke="#9c9c9c" stroke-width="1" stroke-dasharray="3 3"/>
<line x1="103.33" y1="450.0" x2="103.33" y2="603.0" stroke="#9c9c9c" stroke-width="1" stroke-dasharray="3 3"/>
<line x1="123.71" y1="450.0" x2="123.71" y2="603.0" stroke="#9c9c9c" stroke-width="1" stroke-dasharray="3 3"/>
<line x1="138.16" y1="450.0" x2="138.16" y2="603.0" stroke="#9c9c9c" stroke-width="1" stroke-dasharray="3 3"/>
<line x1="149.38" y1="450.0" x2="149.38" y2="603.0" stroke="#9c9c9c" stroke-width="1" stroke-dasharray="3 3"/>
<line x1="158.54" y1="450.0" x2="158.54" y2="603.0" stroke="#9c9c9c" stroke-width="1" stroke-dasharray="3 3"/>
<line x1="166.28" y1="450.0" x2="166.28" y2="603.0" stroke="#9c9c9c" stroke-width="1" stroke-dasharray="3 3"/>
<line x1="172.99" y1="450.0" x2="172.99" y2="603.0" stroke="#9c9c9c" stroke-width="1" stroke-dasharray="3 3"/>
<line x1="178.91" y1="450.0" x2="178.91" y2="603.0" stroke="#9c9c9c" stroke-width="1" stroke-dasharray="3 3"/>
<line x1="184.21" y1="450.0" x2="184.21" y2="603.0" stroke="#9c9c9c" stroke-width="1" stroke-dasharray="3 3"/>
<line x1="219.04" y1="450.0" x2="219.04" y2="603.0" stroke="#9c9c9c" stroke-width="1" stroke-dasharray="3 3"/>
<line x1="239.41" y1="450.0" x2="239.41" y2="603.0" stroke="#9c9c9c" stroke-width="1" stroke-dasharray="3 3"/>
<line x1="253.87" y1="450.0" x2="253.87" y2="603.0" stroke="#9c9c9c" stroke-width="1" stroke-dasharray="3 3"/>
<line x1="265.08" y1="450.0" x2="265.08" y2="603.0" stroke="#9c9c9c" stroke-width="1" stroke-dasharray="3 3"/>
<line x1="274.25" y1="450.0" x2="274.25" y2="603.0" stroke="#9c9c9c" stroke-width="1" stroke-dasharray="3 3"/>
<line x1="281.99" y1="450.0" x2="281.99" y2="603.0" stroke="#9c9c9c" stroke-width="1" stroke-dasharray="3 3"/>
<line x1="288.70" y1="450.0" x2="288.70" y2="603.0" stroke="#9c9c9c" stroke-width="1" stroke-dasharray="3 3"/>
<line x1="294.62" y1="450.0" x2="294.62" y2="603.0" stroke="#9c9c9c" stroke-width="1" stroke-dasharray="3 3"/>
<line x1="299.92" y1="450.0" x2="299.92" y2="603.0" stroke="#9c9c9c" stroke-width="1" stroke-dasharray="3 3"/>
<line x1="334.75" y1="450.0" x2="334.75" y2="603.0" stroke="#9c9c9c" stroke-width="1" stroke-dasharray="3 3"/>
<line x1="355.12" y1="450.0" x2="355.12" y2="603.0" stroke="#9c9c9c" stroke-width="1" stroke-dasharray="3 3"/>
<line x1="369.58" y1="450.0" x2="369.58" y2="603.0" stroke="#9c9c9c" stroke-width="1" stroke-dasharray="3 3"/>
<line x1="380.79" y1="450.0" x2="380.79" y2="603.0" stroke="#9c9c9c" stroke-width="1" stroke-dasharray="3 3"/>
<line x1="389.95" y1="450.0" x2="389.95" y2="603.0" stroke="#9c9c9c" stroke-width="1" stroke-dasharray="3 3"/>
<line x1="397.70" y1="450.0" x2="397.70" y2="603.0" stroke="#9c9c9c" stroke-width="1" stroke-dasharray="3 3"/>
<line x1="404.41" y1="450.0" x2="404.41" y2="603.0" stroke="#9c9c9c" stroke-width="1" stroke-dasharray="3 3"/>
<line x1="410.33" y1="450.0" x2="410.33" y2="603.0" stroke="#9c9c9c" stroke-width="1" stroke-dasharray="3 3"/>
<line x1="415.62" y1="450.0" x2="415.62" y2="603.0" stroke="#9c9c9c" stroke-width="1" stroke-dasharray="3 3"/>
<line x1="450.46" y1="450.0" x2="450.46" y2="603.0" stroke="#9c9c9c" stroke-width="1" stroke-dasharray="3 3"/>
<line x1="470.83" y1="450.0" x2="470.83" y2="603.0" stroke="#9c9c9c" stroke-width="1" stroke-dasharray="3 3"/>
<line x1="485.29" y1="450.0" x2="485.29" y2="603.0" stroke="#9c9c9c" stroke-width="1" stroke-dasharray="3 3"/>
<rect x="68.5" y="448.5" width="428.0" height="154.5" fill="none" stroke="#b0b0b0" stroke-width="1"/>
<line x1="58.5" y1="448.50" x2="68.5" y2="448.50" stroke="#b0b0b0" stroke-width="1"/>
<text x="25.60" y="0" transform="translate(0 455.08) scale(1 1.15)" font-family='"Liberation Mono", monospace' font-size="13.4" font-weight="normal" fill="#c4c4c4" stroke="#c4c4c4" stroke-width="0.32" textLength="32.20" lengthAdjust="spacingAndGlyphs">45dB</text>
<line x1="58.5" y1="474.25" x2="68.5" y2="474.25" stroke="#b0b0b0" stroke-width="1"/>
<text x="25.60" y="0" transform="translate(0 480.83) scale(1 1.15)" font-family='"Liberation Mono", monospace' font-size="13.4" font-weight="normal" fill="#c4c4c4" stroke="#c4c4c4" stroke-width="0.32" textLength="32.20" lengthAdjust="spacingAndGlyphs">27dB</text>
<line x1="58.5" y1="500.00" x2="68.5" y2="500.00" stroke="#b0b0b0" stroke-width="1"/>
<text x="33.65" y="0" transform="translate(0 506.58) scale(1 1.15)" font-family='"Liberation Mono", monospace' font-size="13.4" font-weight="normal" fill="#c4c4c4" stroke="#c4c4c4" stroke-width="0.32" textLength="24.15" lengthAdjust="spacingAndGlyphs">9dB</text>
<line x1="58.5" y1="525.75" x2="68.5" y2="525.75" stroke="#b0b0b0" stroke-width="1"/>
<text x="25.60" y="0" transform="translate(0 532.33) scale(1 1.15)" font-family='"Liberation Mono", monospace' font-size="13.4" font-weight="normal" fill="#c4c4c4" stroke="#c4c4c4" stroke-width="0.32" textLength="32.20" lengthAdjust="spacingAndGlyphs">&#x2013;9dB</text>
<line x1="58.5" y1="551.50" x2="68.5" y2="551.50" stroke="#b0b0b0" stroke-width="1"/>
<text x="17.55" y="0" transform="translate(0 558.08) scale(1 1.15)" font-family='"Liberation Mono", monospace' font-size="13.4" font-weight="normal" fill="#c4c4c4" stroke="#c4c4c4" stroke-width="0.32" textLength="40.25" lengthAdjust="spacingAndGlyphs">&#x2013;27dB</text>
<line x1="58.5" y1="577.25" x2="68.5" y2="577.25" stroke="#b0b0b0" stroke-width="1"/>
<text x="17.55" y="0" transform="translate(0 583.83) scale(1 1.15)" font-family='"Liberation Mono", monospace' font-size="13.4" font-weight="normal" fill="#c4c4c4" stroke="#c4c4c4" stroke-width="0.32" textLength="40.25" lengthAdjust="spacingAndGlyphs">&#x2013;45dB</text>
<line x1="58.5" y1="603.00" x2="68.5" y2="603.00" stroke="#b0b0b0" stroke-width="1"/>
<text x="17.55" y="0" transform="translate(0 609.58) scale(1 1.15)" font-family='"Liberation Mono", monospace' font-size="13.4" font-weight="normal" fill="#c4c4c4" stroke="#c4c4c4" stroke-width="0.32" textLength="40.25" lengthAdjust="spacingAndGlyphs">&#x2013;63dB</text>
<line x1="496.5" y1="448.50" x2="506.5" y2="448.50" stroke="#b0b0b0" stroke-width="1"/>
<text x="516.65" y="0" transform="translate(0 455.08) scale(1 1.15)" font-family='"Liberation Mono", monospace' font-size="13.4" font-weight="normal" fill="#c4c4c4" stroke="#c4c4c4" stroke-width="0.32" textLength="32.20" lengthAdjust="spacingAndGlyphs">180°</text>
<line x1="496.5" y1="474.25" x2="506.5" y2="474.25" stroke="#b0b0b0" stroke-width="1"/>
<text x="516.65" y="0" transform="translate(0 480.83) scale(1 1.15)" font-family='"Liberation Mono", monospace' font-size="13.4" font-weight="normal" fill="#c4c4c4" stroke="#c4c4c4" stroke-width="0.32" textLength="32.20" lengthAdjust="spacingAndGlyphs">120°</text>
<line x1="496.5" y1="500.00" x2="506.5" y2="500.00" stroke="#b0b0b0" stroke-width="1"/>
<text x="524.70" y="0" transform="translate(0 506.58) scale(1 1.15)" font-family='"Liberation Mono", monospace' font-size="13.4" font-weight="normal" fill="#c4c4c4" stroke="#c4c4c4" stroke-width="0.32" textLength="24.15" lengthAdjust="spacingAndGlyphs">60°</text>
<line x1="496.5" y1="525.75" x2="506.5" y2="525.75" stroke="#b0b0b0" stroke-width="1"/>
<text x="532.75" y="0" transform="translate(0 532.33) scale(1 1.15)" font-family='"Liberation Mono", monospace' font-size="13.4" font-weight="normal" fill="#c4c4c4" stroke="#c4c4c4" stroke-width="0.32" textLength="16.10" lengthAdjust="spacingAndGlyphs">0°</text>
<line x1="496.5" y1="551.50" x2="506.5" y2="551.50" stroke="#b0b0b0" stroke-width="1"/>
<text x="516.65" y="0" transform="translate(0 558.08) scale(1 1.15)" font-family='"Liberation Mono", monospace' font-size="13.4" font-weight="normal" fill="#c4c4c4" stroke="#c4c4c4" stroke-width="0.32" textLength="32.20" lengthAdjust="spacingAndGlyphs">&#x2013;60°</text>
<line x1="496.5" y1="577.25" x2="506.5" y2="577.25" stroke="#b0b0b0" stroke-width="1"/>
<text x="508.60" y="0" transform="translate(0 583.83) scale(1 1.15)" font-family='"Liberation Mono", monospace' font-size="13.4" font-weight="normal" fill="#c4c4c4" stroke="#c4c4c4" stroke-width="0.32" textLength="40.25" lengthAdjust="spacingAndGlyphs">&#x2013;120°</text>
<line x1="496.5" y1="603.00" x2="506.5" y2="603.00" stroke="#b0b0b0" stroke-width="1"/>
<text x="508.60" y="0" transform="translate(0 609.58) scale(1 1.15)" font-family='"Liberation Mono", monospace' font-size="13.4" font-weight="normal" fill="#c4c4c4" stroke="#c4c4c4" stroke-width="0.32" textLength="40.25" lengthAdjust="spacingAndGlyphs">&#x2013;180°</text>
<text x="252.67" y="0" transform="translate(0 444.98) scale(1 1.15)" font-family='"Liberation Mono", monospace' font-size="13.4" font-weight="bold" fill="#f00000" stroke="#f00000" stroke-width="0.1" textLength="58.45" lengthAdjust="spacingAndGlyphs">V(v_tx)</text>
<g clip-path="url(#cp2)">
<path d="M68.50,461.14 L69.19,461.01 L69.87,460.87 L70.56,460.74 L71.24,460.60 L71.93,460.47 L72.61,460.34 L73.30,460.21 L73.98,460.08 L74.67,459.95 L75.35,459.82 L76.04,459.70 L76.72,459.57 L77.41,459.45 L78.09,459.32 L78.78,459.20 L79.46,459.08 L80.15,458.97 L80.83,458.85 L81.52,458.73 L82.20,458.62 L82.89,458.50 L83.57,458.39 L84.26,458.28 L84.94,458.17 L85.63,458.06 L86.31,457.95 L87.00,457.85 L87.68,457.74 L88.37,457.64 L89.05,457.53 L89.74,457.43 L90.42,457.33 L91.11,457.23 L91.79,457.13 L92.48,457.04 L93.16,456.94 L93.85,456.85 L94.53,456.76 L95.22,456.66 L95.90,456.57 L96.59,456.48 L97.27,456.40 L97.96,456.31 L98.64,456.22 L99.33,456.14 L100.01,456.06 L100.70,455.97 L101.38,455.89 L102.07,455.81 L102.75,455.73 L103.44,455.66 L104.12,455.58 L104.81,455.51 L105.49,455.43 L106.18,455.36 L106.86,455.29 L107.55,455.22 L108.23,455.15 L108.92,455.08 L109.60,455.01 L110.29,454.95 L110.97,454.88 L111.66,454.82 L112.34,454.76 L113.03,454.70 L113.71,454.64 L114.40,454.58 L115.09,454.52 L115.77,454.46 L116.46,454.41 L117.14,454.35 L117.83,454.30 L118.51,454.25 L119.20,454.20 L119.88,454.15 L120.57,454.10 L121.25,454.06 L121.94,454.01 L122.62,453.97 L123.31,453.92 L123.99,453.88 L124.68,453.84 L125.36,453.80 L126.05,453.76 L126.73,453.72 L127.42,453.69 L128.10,453.65 L128.79,453.62 L129.47,453.59 L130.16,453.56 L130.84,453.53 L131.53,453.51 L132.21,453.48 L132.90,453.46 L133.58,453.43 L134.27,453.41 L134.95,453.39 L135.64,453.38 L136.32,453.36 L137.01,453.35 L137.69,453.34 L138.38,453.33 L139.06,453.32 L139.75,453.31 L140.43,453.31 L141.12,453.31 L141.80,453.31 L142.49,453.32 L143.17,453.33 L143.86,453.34 L144.54,453.35 L145.23,453.37 L145.91,453.39 L146.60,453.42 L147.28,453.45 L147.97,453.49 L148.65,453.53 L149.34,453.57 L150.02,453.63 L150.71,453.69 L151.39,453.75 L152.08,453.83 L152.76,453.91 L153.45,454.01 L154.13,454.12 L154.82,454.24 L155.50,454.38 L156.19,454.53 L156.87,454.71 L157.56,454.91 L158.24,455.14 L158.82,455.36 L159.38,455.60 L159.94,455.87 L160.47,456.16 L160.98,456.48 L161.50,456.85 L161.98,457.24 L162.44,457.66 L162.87,458.12 L163.26,458.58 L163.64,459.09 L163.97,459.60 L164.28,460.12 L164.56,460.66 L164.84,461.25 L165.09,461.86 L165.32,462.46 L165.53,463.04 L165.73,463.69 L165.91,464.30 L166.09,464.97 L166.24,465.59 L166.39,466.26 L166.52,466.86 L166.65,467.49 L166.77,468.17 L166.90,468.90 L167.00,469.52 L167.11,470.17 L167.21,470.86 L167.31,471.58 L167.41,472.34 L167.49,472.94 L167.57,473.56 L167.64,474.21 L167.72,474.88 L167.80,475.57 L167.87,476.29 L167.95,477.04 L168.02,477.81 L168.10,478.60 L168.18,479.42 L168.25,480.26 L168.33,481.13 L168.41,482.01 L168.46,482.61 L168.51,483.22 L168.56,483.83 L168.61,484.46 L168.66,485.08 L168.71,485.72 L168.76,486.36 L168.82,487.00 L168.86,487.61 L168.92,488.29 L168.97,488.93 L169.02,489.58 L169.07,490.23 L169.12,490.87 L169.17,491.51 L169.22,492.15 L169.27,492.79 L169.33,493.42 L169.38,494.04 L169.43,494.66 L169.48,495.27 L169.53,495.87 L169.61,496.75 L169.68,497.62 L169.76,498.46 L169.84,499.29 L169.91,500.08 L169.99,500.86 L170.06,501.58 L170.14,502.33 L170.22,503.02 L170.29,503.70 L170.37,504.35 L170.45,504.97 L170.52,505.57 L170.63,506.34 L170.73,507.06 L170.83,507.75 L170.93,508.41 L171.03,509.03 L171.16,509.76 L171.29,510.44 L171.42,511.08 L171.54,511.68 L171.70,512.36 L171.85,512.98 L172.03,513.65 L172.21,514.27 L172.41,514.91 L172.61,515.50 L172.84,516.11 L173.10,516.72 L173.35,517.26 L173.63,517.81 L173.94,518.34 L174.27,518.85 L174.63,519.35 L175.01,519.81 L175.42,520.26 L175.85,520.67 L176.31,521.06 L176.80,521.43 L177.31,521.76 L177.84,522.08 L178.38,522.35 L178.97,522.63 L179.65,522.90 L180.34,523.15 L181.02,523.36 L181.71,523.55 L182.39,523.72 L183.08,523.87 L183.76,524.01 L184.45,524.13 L185.13,524.25 L185.82,524.35 L186.50,524.44 L187.19,524.53 L187.87,524.61 L188.56,524.68 L189.24,524.75 L189.93,524.81 L190.61,524.87 L191.30,524.92 L191.98,524.97 L192.67,525.02 L193.35,525.06 L194.04,525.10 L194.72,525.14 L195.41,525.17 L196.10,525.21 L196.78,525.24 L197.47,525.27 L198.15,525.29 L198.84,525.32 L199.52,525.35 L200.21,525.37 L200.89,525.39 L201.58,525.41 L202.26,525.43 L202.95,525.45 L203.63,525.47 L204.32,525.48 L205.00,525.50 L205.69,525.51 L206.37,525.53 L207.06,525.54 L207.74,525.56 L208.43,525.57 L209.11,525.58 L209.80,525.59 L210.48,525.60 L211.17,525.61 L211.85,525.62 L212.54,525.63 L213.22,525.64 L213.91,525.65 L214.59,525.66 L215.28,525.67 L215.96,525.67 L216.65,525.68 L217.33,525.69 L218.02,525.70 L218.70,525.70 L219.39,525.71 L220.07,525.72 L220.76,525.72 L221.44,525.73 L222.13,525.73 L222.81,525.74 L223.50,525.74 L224.18,525.75 L224.87,525.75 L225.55,525.76 L226.24,525.76 L226.92,525.77 L227.61,525.77 L228.29,525.78 L228.98,525.78 L229.66,525.79 L230.35,525.79 L231.03,525.79 L231.72,525.80 L232.40,525.80 L233.09,525.81 L233.77,525.81 L234.46,525.81 L235.14,525.82 L235.83,525.82 L236.51,525.82 L237.20,525.83 L237.88,525.83 L238.57,525.83 L239.25,525.84 L239.94,525.84 L240.62,525.85 L241.31,525.85 L241.99,525.85 L242.68,525.85 L243.37,525.86 L244.05,525.86 L244.74,525.86 L245.42,525.87 L246.11,525.87 L246.79,525.87 L247.48,525.88 L248.16,525.88 L248.85,525.88 L249.53,525.89 L250.22,525.89 L250.90,525.89 L251.59,525.90 L252.27,525.90 L252.96,525.90 L253.64,525.91 L254.33,525.91 L255.01,525.91 L255.70,525.92 L256.38,525.92 L257.07,525.92 L257.75,525.93 L258.44,525.93 L259.12,525.93 L259.81,525.94 L260.49,525.94 L261.18,525.95 L261.86,525.95 L262.55,525.95 L263.23,525.96 L263.92,525.96 L264.60,525.97 L265.29,525.97 L265.97,525.97 L266.66,525.98 L267.34,525.98 L268.03,525.99 L268.71,525.99 L269.40,525.99 L270.08,526.00 L270.77,526.00 L271.45,526.01 L272.14,526.01 L272.82,526.02 L273.51,526.02 L274.19,526.03 L274.88,526.03 L275.56,526.04 L276.25,526.04 L276.93,526.05 L277.62,526.05 L278.30,526.06 L278.99,526.07 L279.67,526.07 L280.36,526.08 L281.04,526.08 L281.73,526.09 L282.41,526.10 L283.10,526.10 L283.78,526.11 L284.47,526.12 L285.15,526.12 L285.84,526.13 L286.52,526.14 L287.21,526.15 L287.89,526.15 L288.58,526.16 L289.27,526.17 L289.95,526.18 L290.64,526.19 L291.32,526.20 L292.01,526.21 L292.69,526.22 L293.38,526.23 L294.06,526.24 L294.75,526.25 L295.43,526.26 L296.12,526.27 L296.80,526.28 L297.49,526.30 L298.17,526.31 L298.86,526.32 L299.54,526.34 L300.23,526.35 L300.91,526.37 L301.60,526.38 L302.28,526.40 L302.97,526.41 L303.65,526.43 L304.34,526.45 L305.02,526.47 L305.71,526.49 L306.39,526.51 L307.08,526.54 L307.76,526.56 L308.45,526.59 L309.13,526.61 L309.82,526.64 L310.50,526.67 L311.19,526.70 L311.87,526.74 L312.56,526.77 L313.24,526.81 L313.93,526.86 L314.61,526.90 L315.30,526.95 L315.98,527.00 L316.67,527.06 L317.35,527.12 L318.04,527.19 L318.72,527.27 L319.41,527.35 L320.09,527.44 L320.78,527.55 L321.46,527.66 L322.15,527.80 L322.83,527.95 L323.52,528.13 L324.10,528.30 L324.68,528.49 L325.25,528.72 L325.79,528.98 L326.34,529.28 L326.84,529.61 L327.32,529.99 L327.78,530.43 L328.19,530.90 L328.56,531.41 L328.87,531.95 L329.15,532.49 L329.40,533.08 L329.63,533.70 L329.81,534.28 L329.99,534.95 L330.15,535.62 L330.29,536.27 L330.40,536.88 L330.52,537.55 L330.61,538.15 L330.70,538.81 L330.79,539.53 L330.86,540.13 L330.93,540.73 L330.99,541.34 L331.04,541.94 L331.10,542.54 L331.15,543.14 L331.20,543.75 L331.24,544.35 L331.28,544.95 L331.32,545.55 L331.36,546.16 L331.40,546.76 L331.43,547.36 L331.47,547.97 L331.50,548.58 L331.53,549.18 L331.56,549.79 L331.59,550.41 L331.62,551.02 L331.65,551.64 L331.68,552.25 L331.71,552.86 L331.73,553.47 L331.76,554.08 L331.78,554.70 L331.81,555.30 L331.83,555.91 L331.85,556.51 L331.87,557.12 L331.90,557.74 L331.92,558.34 L331.94,558.95 L331.96,559.57 L331.99,560.20 L332.01,560.80 L332.03,561.41 L332.05,562.02 L332.07,562.63 L332.09,563.23 L332.11,563.85 L332.13,564.47 L332.15,565.09 L332.18,565.71 L332.20,566.33 L332.22,566.94 L332.24,567.55 L332.26,568.16 L332.28,568.77 L332.30,569.39 L332.33,570.00 L332.35,570.61 L332.37,571.21 L332.39,571.83 L332.42,572.44 L332.44,573.06 L332.46,573.67 L332.49,574.28 L332.51,574.89 L332.54,575.50 L332.56,576.12 L332.59,576.73 L332.62,577.33 L332.65,577.94 L332.68,578.55 L332.71,579.16 L332.74,579.76 L332.77,580.36 L332.80,580.97 L332.84,581.57 L332.87,582.18 L332.91,582.79 L332.95,583.40 L332.99,584.01 L333.03,584.61 L333.08,585.21 L333.13,585.82 L333.18,586.42 L333.24,587.02 L333.29,587.63 L333.36,588.23 L333.42,588.82 L333.51,589.55 L333.60,590.24 L333.69,590.87 L333.79,591.52 L333.92,592.21 L334.06,592.89 L334.19,593.50 L334.35,594.12 L334.54,594.74 L334.74,595.35 L334.97,595.93 L335.22,596.48 L335.51,597.01 L335.84,597.53 L336.20,598.00 L336.61,598.45 L337.07,598.86 L337.55,599.23 L338.07,599.56 L338.62,599.84 L339.19,600.10 L339.76,600.31 L340.33,600.50 L340.93,600.67 L341.52,600.82 L342.19,600.96 L342.87,601.09 L343.56,601.21 L344.24,601.31 L344.93,601.40 L345.61,601.49 L346.30,601.56 L346.98,601.63 L347.67,601.69 L348.35,601.75 L349.04,601.80 L349.72,601.85 L350.41,601.89 L351.09,601.94 L351.78,601.97 L352.46,602.01 L353.15,602.04 L353.83,602.08 L354.52,602.11 L355.20,602.13 L355.89,602.16 L356.57,602.19 L357.26,602.21 L357.94,602.23 L358.63,602.25 L359.31,602.28 L360.00,602.29 L360.68,602.31 L361.37,602.33 L362.05,602.35 L362.74,602.36 L363.42,602.38 L364.11,602.40 L364.79,602.41 L365.48,602.42 L366.16,602.44 L366.85,602.45 L367.53,602.46 L368.22,602.47 L368.90,602.48 L369.59,602.50 L370.28,602.51 L370.96,602.52 L371.65,602.53 L372.33,602.54 L373.02,602.55 L373.70,602.55 L374.39,602.56 L375.07,602.57 L375.76,602.58 L376.44,602.59 L377.13,602.60 L377.81,602.60 L378.50,602.61 L379.18,602.62 L379.87,602.63 L380.55,602.63 L381.24,602.64 L381.92,602.65 L382.61,602.65 L383.29,602.66 L383.98,602.66 L384.66,602.67 L385.35,602.68 L386.03,602.68 L386.72,602.69 L387.40,602.69 L388.09,602.70 L388.77,602.70 L389.46,602.71 L390.14,602.71 L390.83,602.72 L391.51,602.72 L392.20,602.73 L392.88,602.73 L393.57,602.73 L394.25,602.74 L394.94,602.74 L395.62,602.75 L396.31,602.75 L396.99,602.75 L397.68,602.76 L398.36,602.76 L399.05,602.77 L399.73,602.77 L400.42,602.77 L401.10,602.78 L401.79,602.78 L402.47,602.78 L403.16,602.79 L403.84,602.79 L404.53,602.79 L405.21,602.80 L405.90,602.80 L406.58,602.80 L407.27,602.81 L407.95,602.81 L408.64,602.81 L409.32,602.81 L410.01,602.82 L410.69,602.82 L411.38,602.82 L412.06,602.82 L412.75,602.83 L413.43,602.83 L414.12,602.83 L414.80,602.83 L415.49,602.84 L416.18,602.84 L416.86,602.84 L417.55,602.84 L418.23,602.85 L418.92,602.85 L419.60,602.85 L420.29,602.85 L420.97,602.86 L421.66,602.86 L422.34,602.86 L423.03,602.86 L423.71,602.86 L424.40,602.87 L425.08,602.87 L425.77,602.87 L426.45,602.87 L427.14,602.87 L427.82,602.87 L428.51,602.88 L429.19,602.88 L429.88,602.88 L430.56,602.88 L431.25,602.88 L431.93,602.88 L432.62,602.89 L433.30,602.89 L433.99,602.89 L434.67,602.89 L435.36,602.89 L436.04,602.89 L436.73,602.90 L437.41,602.90 L438.10,602.90 L438.78,602.90 L439.47,602.90 L440.15,602.90 L440.84,602.90 L441.52,602.91 L442.21,602.91 L442.89,602.91 L443.58,602.91 L444.26,602.91 L444.95,602.91 L445.63,602.91 L446.32,602.91 L447.00,602.92 L447.69,602.92 L448.37,602.92 L449.06,602.92 L449.74,602.92 L450.43,602.92 L451.11,602.92 L451.80,602.92 L452.48,602.92 L453.17,602.93 L453.85,602.93 L454.54,602.93 L455.22,602.93 L455.91,602.93 L456.59,602.93 L457.28,602.93 L457.96,602.93 L458.65,602.93 L459.33,602.93 L460.02,602.93 L460.70,602.94 L461.39,602.94 L462.08,602.94 L462.76,602.94 L463.45,602.94 L464.13,602.94 L464.82,602.94 L465.50,602.94 L466.19,602.94 L466.87,602.94 L467.56,602.94 L468.24,602.94 L468.93,602.95 L469.61,602.95 L470.30,602.95 L470.98,602.95 L471.67,602.95 L472.35,602.95 L473.04,602.95 L473.72,602.95 L474.41,602.95 L475.09,602.95 L475.78,602.95 L476.46,602.95 L477.15,602.95 L477.83,602.95 L478.52,602.96 L479.20,602.96 L479.89,602.96 L480.57,602.96 L481.26,602.96 L481.94,602.96 L482.63,602.96 L483.31,602.96 L484.00,602.96 L484.68,602.96 L485.37,602.96 L486.05,602.96 L486.74,602.96 L487.42,602.96 L488.11,602.96 L488.79,602.96 L489.48,602.96 L490.16,602.96 L490.85,602.96 L491.53,602.97 L492.22,602.97 L492.90,602.97 L493.59,602.97 L494.27,602.97 L494.96,602.97 L495.64,602.97 L496.33,602.97 L496.50,602.97" fill="none" stroke="#f00000" stroke-width="1.35" stroke-dasharray="3.5 2.5"/>
<path d="M68.50,556.59 L69.19,556.28 L69.87,555.97 L70.56,555.67 L71.24,555.36 L71.93,555.05 L72.61,554.73 L73.30,554.42 L73.98,554.11 L74.67,553.80 L75.35,553.48 L76.04,553.17 L76.72,552.85 L77.41,552.53 L78.09,552.21 L78.78,551.89 L79.46,551.57 L80.15,551.25 L80.83,550.93 L81.52,550.61 L82.20,550.28 L82.89,549.96 L83.57,549.63 L84.26,549.30 L84.94,548.98 L85.63,548.65 L86.31,548.32 L87.00,547.99 L87.68,547.66 L88.37,547.32 L89.05,546.99 L89.74,546.66 L90.42,546.32 L91.11,545.99 L91.79,545.65 L92.48,545.31 L93.16,544.97 L93.85,544.63 L94.53,544.29 L95.22,543.95 L95.90,543.61 L96.59,543.27 L97.27,542.92 L97.96,542.58 L98.64,542.23 L99.33,541.89 L100.01,541.54 L100.70,541.19 L101.38,540.84 L102.07,540.49 L102.75,540.14 L103.44,539.78 L104.12,539.43 L104.81,539.07 L105.49,538.72 L106.18,538.36 L106.86,538.00 L107.55,537.64 L108.23,537.28 L108.92,536.92 L109.60,536.55 L110.29,536.19 L110.97,535.82 L111.66,535.45 L112.34,535.08 L113.03,534.71 L113.71,534.34 L114.40,533.97 L115.09,533.59 L115.77,533.21 L116.46,532.84 L117.14,532.46 L117.83,532.07 L118.51,531.69 L119.20,531.31 L119.88,530.92 L120.57,530.53 L121.25,530.14 L121.94,529.75 L122.62,529.35 L123.31,528.95 L123.99,528.55 L124.68,528.15 L125.36,527.75 L126.05,527.34 L126.73,526.93 L127.42,526.52 L127.93,526.21 L128.44,525.89 L128.96,525.58 L129.47,525.26 L129.99,524.94 L130.50,524.62 L131.01,524.30 L131.53,523.98 L132.04,523.65 L132.55,523.33 L133.07,523.00 L133.58,522.66 L134.10,522.33 L134.61,521.99 L135.12,521.65 L135.64,521.31 L136.15,520.97 L136.66,520.62 L137.18,520.27 L137.69,519.92 L138.21,519.57 L138.72,519.21 L139.23,518.85 L139.75,518.48 L140.26,518.11 L140.78,517.74 L141.29,517.36 L141.80,516.99 L142.32,516.60 L142.83,516.21 L143.34,515.82 L143.86,515.43 L144.37,515.02 L144.89,514.62 L145.40,514.21 L145.91,513.79 L146.43,513.37 L146.94,512.94 L147.45,512.50 L147.97,512.06 L148.48,511.62 L149.00,511.16 L149.51,510.70 L150.02,510.23 L150.54,509.75 L151.05,509.26 L151.57,508.76 L152.08,508.25 L152.59,507.73 L153.11,507.20 L153.62,506.66 L154.13,506.11 L154.65,505.54 L155.16,504.96 L155.68,504.36 L156.19,503.74 L156.70,503.11 L157.22,502.45 L157.73,501.78 L158.24,501.08 L158.61,500.56 L158.97,500.04 L159.33,499.51 L159.66,499.01 L159.99,498.49 L160.32,497.96 L160.64,497.43 L160.96,496.89 L161.27,496.36 L161.57,495.81 L161.88,495.24 L162.16,494.70 L162.44,494.15 L162.72,493.57 L163.00,492.98 L163.26,492.43 L163.51,491.86 L163.77,491.27 L164.02,490.66 L164.25,490.09 L164.48,489.51 L164.71,488.90 L164.92,488.32 L165.14,487.71 L165.35,487.12 L165.55,486.52 L165.75,485.89 L165.95,485.28 L166.14,484.68 L166.32,484.10 L166.49,483.50 L166.67,482.90 L166.85,482.28 L167.03,481.67 L167.21,481.05 L167.39,480.44 L167.57,479.84 L167.74,479.26 L167.95,478.64 L168.18,478.01 L168.43,477.45 L168.79,476.95 L169.40,477.04 L169.73,477.55 L169.99,478.11 L170.22,478.70 L170.42,479.26 L170.63,479.85 L170.83,480.46 L171.03,481.06 L171.24,481.66 L171.44,482.26 L171.65,482.84 L171.85,483.40 L172.08,484.02 L172.31,484.61 L172.54,485.19 L172.79,485.80 L173.05,486.39 L173.30,486.95 L173.58,487.54 L173.86,488.10 L174.14,488.64 L174.45,489.19 L174.76,489.73 L175.09,490.27 L175.42,490.79 L175.78,491.33 L176.13,491.83 L176.52,492.35 L176.90,492.84 L177.28,493.30 L177.69,493.77 L178.10,494.22 L178.53,494.67 L178.97,495.11 L179.48,495.59 L180.00,496.05 L180.51,496.48 L181.02,496.89 L181.54,497.28 L182.05,497.65 L182.56,498.00 L183.08,498.34 L183.59,498.66 L184.28,499.06 L184.96,499.45 L185.65,499.81 L186.33,500.15 L187.02,500.48 L187.70,500.79 L188.39,501.08 L189.07,501.36 L189.76,501.62 L190.44,501.88 L191.13,502.12 L191.81,502.35 L192.50,502.57 L193.18,502.78 L193.87,502.98 L194.55,503.17 L195.24,503.36 L195.92,503.53 L196.61,503.70 L197.29,503.87 L197.98,504.02 L198.66,504.17 L199.35,504.32 L200.03,504.46 L200.72,504.59 L201.40,504.72 L202.09,504.84 L202.77,504.96 L203.46,505.08 L204.14,505.19 L204.83,505.29 L205.51,505.40 L206.20,505.49 L206.88,505.59 L207.57,505.68 L208.26,505.77 L208.94,505.86 L209.63,505.94 L210.31,506.02 L211.00,506.09 L211.68,506.17 L212.37,506.24 L213.05,506.31 L213.74,506.37 L214.42,506.44 L215.11,506.50 L215.79,506.56 L216.48,506.62 L217.16,506.67 L217.85,506.73 L218.53,506.78 L219.22,506.83 L219.90,506.88 L220.59,506.92 L221.27,506.97 L221.96,507.01 L222.64,507.05 L223.33,507.09 L224.01,507.13 L224.70,507.17 L225.38,507.21 L226.07,507.24 L226.75,507.27 L227.44,507.31 L228.12,507.34 L228.81,507.37 L229.49,507.39 L230.18,507.42 L230.86,507.45 L231.55,507.47 L232.23,507.50 L232.92,507.52 L233.60,507.54 L234.29,507.56 L234.97,507.58 L235.66,507.60 L236.34,507.62 L237.03,507.63 L237.71,507.65 L238.40,507.66 L239.08,507.68 L239.77,507.69 L240.45,507.70 L241.14,507.71 L241.82,507.73 L242.51,507.74 L243.19,507.74 L243.88,507.75 L244.56,507.76 L245.25,507.77 L245.93,507.77 L246.62,507.78 L247.30,507.78 L247.99,507.78 L248.67,507.79 L249.36,507.79 L250.04,507.79 L250.73,507.79 L251.41,507.79 L252.10,507.79 L252.78,507.79 L253.47,507.78 L254.16,507.78 L254.84,507.77 L255.53,507.77 L256.21,507.76 L256.90,507.76 L257.58,507.75 L258.27,507.74 L258.95,507.73 L259.64,507.72 L260.32,507.71 L261.01,507.70 L261.69,507.68 L262.38,507.67 L263.06,507.66 L263.75,507.64 L264.43,507.62 L265.12,507.61 L265.80,507.59 L266.49,507.57 L267.17,507.55 L267.86,507.53 L268.54,507.51 L269.23,507.48 L269.91,507.46 L270.60,507.43 L271.28,507.41 L271.97,507.38 L272.65,507.35 L273.34,507.32 L274.02,507.29 L274.71,507.26 L275.39,507.22 L276.08,507.19 L276.76,507.15 L277.45,507.11 L278.13,507.07 L278.82,507.03 L279.50,506.99 L280.19,506.95 L280.87,506.90 L281.56,506.85 L282.24,506.80 L282.93,506.75 L283.61,506.70 L284.30,506.64 L284.98,506.59 L285.67,506.53 L286.35,506.47 L287.04,506.40 L287.72,506.34 L288.41,506.27 L289.09,506.20 L289.78,506.13 L290.46,506.05 L291.15,505.97 L291.83,505.89 L292.52,505.81 L293.20,505.72 L293.89,505.63 L294.57,505.54 L295.26,505.44 L295.94,505.34 L296.63,505.23 L297.31,505.13 L298.00,505.01 L298.68,504.89 L299.37,504.77 L300.06,504.65 L300.74,504.51 L301.43,504.38 L302.11,504.24 L302.80,504.09 L303.48,503.93 L304.17,503.77 L304.85,503.61 L305.54,503.43 L306.22,503.25 L306.91,503.06 L307.59,502.86 L308.28,502.65 L308.96,502.44 L309.65,502.21 L310.33,501.97 L311.02,501.72 L311.70,501.46 L312.39,501.18 L313.07,500.90 L313.76,500.59 L314.44,500.27 L315.13,499.93 L315.81,499.57 L316.50,499.20 L317.18,498.79 L317.70,498.48 L318.21,498.14 L318.72,497.79 L319.24,497.43 L319.75,497.04 L320.26,496.63 L320.78,496.20 L321.29,495.75 L321.81,495.27 L322.32,494.76 L322.83,494.21 L323.35,493.63 L323.74,493.16 L324.13,492.67 L324.49,492.19 L324.86,491.67 L325.20,491.16 L325.54,490.62 L325.86,490.09 L326.18,489.53 L326.48,488.98 L326.75,488.44 L327.03,487.87 L327.28,487.32 L327.53,486.74 L327.76,486.19 L327.98,485.60 L328.21,484.98 L328.42,484.39 L328.62,483.77 L328.81,483.19 L328.99,482.58 L329.17,481.93 L329.33,481.33 L329.49,480.70 L329.65,480.04 L329.79,479.45 L329.92,478.82 L330.06,478.16 L330.20,477.48 L330.31,476.87 L330.43,476.24 L330.54,475.59 L330.66,474.90 L330.77,474.19 L330.86,473.60 L330.95,473.00 L331.04,472.40 L331.12,471.80 L331.21,471.20 L331.29,470.61 L331.38,470.01 L331.46,469.41 L331.55,468.81 L331.64,468.22 L331.74,467.62 L331.87,467.03 L332.42,467.28 L332.53,467.87 L332.62,468.46 L332.71,469.06 L332.79,469.66 L332.87,470.26 L332.95,470.86 L333.02,471.46 L333.10,472.05 L333.18,472.65 L333.26,473.25 L333.35,473.85 L333.43,474.45 L333.53,475.14 L333.62,475.75 L333.74,476.49 L333.85,477.20 L333.96,477.88 L334.08,478.53 L334.19,479.16 L334.31,479.77 L334.44,480.47 L334.58,481.14 L334.72,481.78 L334.85,482.40 L334.99,482.99 L335.15,483.66 L335.31,484.29 L335.47,484.90 L335.63,485.49 L335.81,486.14 L336.00,486.76 L336.18,487.35 L336.36,487.92 L336.57,488.54 L336.77,489.14 L336.98,489.71 L337.21,490.33 L337.43,490.92 L337.66,491.49 L337.91,492.08 L338.16,492.68 L338.42,493.24 L338.69,493.83 L338.96,494.40 L339.24,494.95 L339.51,495.49 L339.81,496.05 L340.10,496.59 L340.40,497.12 L340.72,497.67 L341.04,498.20 L341.36,498.72 L341.70,499.26 L342.19,500.00 L342.53,500.50 L343.04,501.23 L343.56,501.94 L344.07,502.62 L344.58,503.28 L345.10,503.92 L345.61,504.53 L346.13,505.14 L346.64,505.72 L347.15,506.29 L347.67,506.85 L348.18,507.39 L348.70,507.92 L349.21,508.44 L349.72,508.95 L350.24,509.45 L350.75,509.94 L351.26,510.42 L351.78,510.89 L352.29,511.36 L352.81,511.82 L353.32,512.26 L353.83,512.71 L354.35,513.14 L354.86,513.57 L355.37,514.00 L355.89,514.41 L356.40,514.83 L356.92,515.23 L357.43,515.64 L357.94,516.03 L358.46,516.43 L358.97,516.82 L359.49,517.20 L360.00,517.58 L360.51,517.96 L361.03,518.33 L361.54,518.70 L362.05,519.07 L362.57,519.43 L363.08,519.79 L363.60,520.15 L364.11,520.51 L364.62,520.86 L365.14,521.21 L365.65,521.55 L366.16,521.90 L366.68,522.24 L367.19,522.58 L367.71,522.91 L368.22,523.25 L368.73,523.58 L369.25,523.91 L369.76,524.24 L370.28,524.56 L370.79,524.89 L371.30,525.21 L371.82,525.53 L372.33,525.85 L372.84,526.17 L373.36,526.49 L373.87,526.80 L374.39,527.11 L374.90,527.42 L375.41,527.73 L376.10,528.15 L376.78,528.55 L377.47,528.96 L378.15,529.37 L378.84,529.77 L379.52,530.17 L380.21,530.57 L380.89,530.96 L381.58,531.36 L382.26,531.75 L382.95,532.14 L383.63,532.53 L384.32,532.92 L385.00,533.31 L385.69,533.69 L386.37,534.08 L387.06,534.46 L387.74,534.84 L388.43,535.22 L389.11,535.60 L389.80,535.97 L390.48,536.35 L391.17,536.73 L391.85,537.10 L392.54,537.47 L393.23,537.84 L393.91,538.22 L394.60,538.59 L395.28,538.95 L395.97,539.32 L396.65,539.69 L397.34,540.06 L398.02,540.42 L398.71,540.79 L399.39,541.15 L400.08,541.52 L400.76,541.88 L401.45,542.24 L402.13,542.60 L402.82,542.96 L403.50,543.32 L404.19,543.68 L404.87,544.04 L405.56,544.40 L406.24,544.76 L406.93,545.11 L407.61,545.47 L408.30,545.83 L408.98,546.18 L409.67,546.54 L410.35,546.89 L411.04,547.25 L411.72,547.60 L412.41,547.95 L413.09,548.31 L413.78,548.66 L414.46,549.01 L415.15,549.36 L415.83,549.72 L416.52,550.07 L417.20,550.42 L417.89,550.77 L418.57,551.12 L419.26,551.47 L419.94,551.82 L420.63,552.17 L421.31,552.52 L422.00,552.87 L422.68,553.21 L423.37,553.56 L424.05,553.91 L424.74,554.26 L425.42,554.60 L426.11,554.95 L426.79,555.30 L427.48,555.65 L428.16,555.99 L428.85,556.34 L429.53,556.68 L430.22,557.03 L430.90,557.38 L431.59,557.72 L432.27,558.07 L432.96,558.41 L433.64,558.76 L434.33,559.10 L435.01,559.45 L435.70,559.79 L436.38,560.14 L437.07,560.48 L437.75,560.82 L438.44,561.17 L439.13,561.51 L439.81,561.85 L440.50,562.20 L441.18,562.54 L441.87,562.88 L442.55,563.23 L443.24,563.57 L443.92,563.91 L444.61,564.26 L445.29,564.60 L445.98,564.94 L446.66,565.28 L447.35,565.63 L448.03,565.97 L448.72,566.31 L449.40,566.65 L450.09,566.99 L450.77,567.34 L451.46,567.68 L452.14,568.02 L452.83,568.36 L453.51,568.70 L454.20,569.04 L454.88,569.39 L455.57,569.73 L456.25,570.07 L456.94,570.41 L457.62,570.75 L458.31,571.09 L458.99,571.43 L459.68,571.77 L460.36,572.11 L461.05,572.46 L461.73,572.80 L462.42,573.14 L463.10,573.48 L463.79,573.82 L464.47,574.16 L465.16,574.50 L465.84,574.84 L466.53,575.18 L467.21,575.52 L467.90,575.86 L468.58,576.20 L469.27,576.54 L469.95,576.88 L470.64,577.22 L471.32,577.56 L472.01,577.90 L472.69,578.24 L473.38,578.58 L474.06,578.92 L474.75,579.26 L475.43,579.60 L476.12,579.94 L476.80,580.28 L477.49,580.62 L478.17,580.96 L478.86,581.30 L479.54,581.64 L480.23,581.98 L480.91,582.32 L481.60,582.66 L482.28,583.00 L482.97,583.34 L483.65,583.68 L484.34,584.02 L485.03,584.36 L485.71,584.70 L486.40,585.04 L487.08,585.38 L487.77,585.72 L488.45,586.06 L489.14,586.40 L489.82,586.74 L490.51,587.08 L491.19,587.41 L491.88,587.75 L492.56,588.09 L493.25,588.43 L493.93,588.77 L494.62,589.11 L495.30,589.45 L495.99,589.79 L496.50,590.04" fill="none" stroke="#f00000" stroke-width="1.35"/>
</g>
<line x1="68.50" y1="603.0" x2="68.50" y2="613.0" stroke="#b0b0b0" stroke-width="1"/>
<line x1="103.33" y1="603.0" x2="103.33" y2="608.0" stroke="#b0b0b0" stroke-width="1"/>
<line x1="123.71" y1="603.0" x2="123.71" y2="608.0" stroke="#b0b0b0" stroke-width="1"/>
<line x1="138.16" y1="603.0" x2="138.16" y2="608.0" stroke="#b0b0b0" stroke-width="1"/>
<line x1="149.38" y1="603.0" x2="149.38" y2="608.0" stroke="#b0b0b0" stroke-width="1"/>
<line x1="158.54" y1="603.0" x2="158.54" y2="608.0" stroke="#b0b0b0" stroke-width="1"/>
<line x1="166.28" y1="603.0" x2="166.28" y2="608.0" stroke="#b0b0b0" stroke-width="1"/>
<line x1="172.99" y1="603.0" x2="172.99" y2="608.0" stroke="#b0b0b0" stroke-width="1"/>
<line x1="178.91" y1="603.0" x2="178.91" y2="608.0" stroke="#b0b0b0" stroke-width="1"/>
<line x1="184.21" y1="603.0" x2="184.21" y2="613.0" stroke="#b0b0b0" stroke-width="1"/>
<line x1="219.04" y1="603.0" x2="219.04" y2="608.0" stroke="#b0b0b0" stroke-width="1"/>
<line x1="239.41" y1="603.0" x2="239.41" y2="608.0" stroke="#b0b0b0" stroke-width="1"/>
<line x1="253.87" y1="603.0" x2="253.87" y2="608.0" stroke="#b0b0b0" stroke-width="1"/>
<line x1="265.08" y1="603.0" x2="265.08" y2="608.0" stroke="#b0b0b0" stroke-width="1"/>
<line x1="274.25" y1="603.0" x2="274.25" y2="608.0" stroke="#b0b0b0" stroke-width="1"/>
<line x1="281.99" y1="603.0" x2="281.99" y2="608.0" stroke="#b0b0b0" stroke-width="1"/>
<line x1="288.70" y1="603.0" x2="288.70" y2="608.0" stroke="#b0b0b0" stroke-width="1"/>
<line x1="294.62" y1="603.0" x2="294.62" y2="608.0" stroke="#b0b0b0" stroke-width="1"/>
<line x1="299.92" y1="603.0" x2="299.92" y2="613.0" stroke="#b0b0b0" stroke-width="1"/>
<line x1="334.75" y1="603.0" x2="334.75" y2="608.0" stroke="#b0b0b0" stroke-width="1"/>
<line x1="355.12" y1="603.0" x2="355.12" y2="608.0" stroke="#b0b0b0" stroke-width="1"/>
<line x1="369.58" y1="603.0" x2="369.58" y2="608.0" stroke="#b0b0b0" stroke-width="1"/>
<line x1="380.79" y1="603.0" x2="380.79" y2="608.0" stroke="#b0b0b0" stroke-width="1"/>
<line x1="389.95" y1="603.0" x2="389.95" y2="608.0" stroke="#b0b0b0" stroke-width="1"/>
<line x1="397.70" y1="603.0" x2="397.70" y2="608.0" stroke="#b0b0b0" stroke-width="1"/>
<line x1="404.41" y1="603.0" x2="404.41" y2="608.0" stroke="#b0b0b0" stroke-width="1"/>
<line x1="410.33" y1="603.0" x2="410.33" y2="608.0" stroke="#b0b0b0" stroke-width="1"/>
<line x1="415.62" y1="603.0" x2="415.62" y2="613.0" stroke="#b0b0b0" stroke-width="1"/>
<line x1="450.46" y1="603.0" x2="450.46" y2="608.0" stroke="#b0b0b0" stroke-width="1"/>
<line x1="470.83" y1="603.0" x2="470.83" y2="608.0" stroke="#b0b0b0" stroke-width="1"/>
<line x1="485.29" y1="603.0" x2="485.29" y2="608.0" stroke="#b0b0b0" stroke-width="1"/>
<text x="52.90" y="0" transform="translate(0 628.58) scale(1 1.15)" font-family='"Liberation Mono", monospace' font-size="13.4" font-weight="normal" fill="#c4c4c4" stroke="#c4c4c4" stroke-width="0.32" textLength="32.20" lengthAdjust="spacingAndGlyphs">1KHz</text>
<text x="164.58" y="0" transform="translate(0 628.58) scale(1 1.15)" font-family='"Liberation Mono", monospace' font-size="13.4" font-weight="normal" fill="#c4c4c4" stroke="#c4c4c4" stroke-width="0.32" textLength="40.25" lengthAdjust="spacingAndGlyphs">10KHz</text>
<text x="276.27" y="0" transform="translate(0 628.58) scale(1 1.15)" font-family='"Liberation Mono", monospace' font-size="13.4" font-weight="normal" fill="#c4c4c4" stroke="#c4c4c4" stroke-width="0.32" textLength="48.30" lengthAdjust="spacingAndGlyphs">100KHz</text>
<text x="400.02" y="0" transform="translate(0 628.58) scale(1 1.15)" font-family='"Liberation Mono", monospace' font-size="13.4" font-weight="normal" fill="#c4c4c4" stroke="#c4c4c4" stroke-width="0.32" textLength="32.20" lengthAdjust="spacingAndGlyphs">1MHz</text>
</svg>
<svg width="1340" height="659" style="position:absolute;left:0;top:0" font-family='"Liberation Sans", sans-serif'>
<g fill="none" stroke="#1c1cff" stroke-width="1.3" stroke-linejoin="miter">
<path d="M855.40,312.00 L855.40,279.60"/>
<path d="M855.40,275.00 L855.40,216.00 L933.10,216.00"/>
<path d="M933.10,216.00 C 933.10,221.00 937.10,224.50 942.30,224.50 C 945.50,224.50 947.50,223.40 948.90,221.80 C 952.00,219.00 951.50,210.30 949.00,210.30 C 946.50,210.30 945.80,219.00 948.90,221.80 C 950.40,223.60 952.60,225.00 955.55,225.00 C 958.50,225.00 960.70,223.60 962.20,221.80 C 965.30,219.00 964.80,210.30 962.30,210.30 C 959.80,210.30 959.10,219.00 962.20,221.80 C 963.60,223.40 965.60,224.50 968.60,224.50 C 973.80,224.50 977.80,221.00 977.80,216.00"/>
<path d="M977.80,216.00 L1152.00,216.00"/>
<path d="M1151.80,216.00 C 1151.80,221.00 1155.80,224.50 1161.00,224.50 C 1164.20,224.50 1166.20,223.40 1167.60,221.80 C 1170.70,219.00 1170.20,210.30 1167.70,210.30 C 1165.20,210.30 1164.50,219.00 1167.60,221.80 C 1169.10,223.60 1171.30,225.00 1174.25,225.00 C 1177.20,225.00 1179.40,223.60 1180.90,221.80 C 1184.00,219.00 1183.50,210.30 1181.00,210.30 C 1178.50,210.30 1177.80,219.00 1180.90,221.80 C 1182.30,223.40 1184.30,224.50 1187.30,224.50 C 1192.50,224.50 1196.50,221.00 1196.50,216.00"/>
<path d="M1196.50,216.00 L1222.00,216.00"/>
<path d="M846.20,275.00 L864.60,275.00"/>
<path d="M846.20,279.60 L864.60,279.60"/>
<path d="M855.40,312.00 L872.40,312.00"/>
<path d="M855.40,312.00 L855.40,320.20"/>
<path d="M855.40,320.20 C 850.40,320.20 846.90,324.12 846.90,329.21 C 846.90,332.35 848.00,334.31 849.60,335.68 C 852.40,338.72 861.10,338.23 861.10,335.78 C 861.10,333.33 852.40,332.64 849.60,335.68 C 847.80,337.15 846.40,339.31 846.40,342.20 C 846.40,345.09 847.80,347.24 849.60,348.71 C 852.40,351.75 861.10,351.26 861.10,348.81 C 861.10,346.36 852.40,345.68 849.60,348.71 C 848.00,350.09 846.90,352.05 846.90,354.99 C 846.90,360.08 850.40,364.00 855.40,364.00"/>
<path d="M855.40,364.00 L855.40,399.70 L942.10,399.70"/>
<path d="M942.10,399.70 C 942.10,404.70 946.10,408.20 951.30,408.20 C 954.50,408.20 956.50,407.10 957.90,405.50 C 961.00,402.70 960.50,394.00 958.00,394.00 C 955.50,394.00 954.80,402.70 957.90,405.50 C 959.40,407.30 961.60,408.70 964.55,408.70 C 967.50,408.70 969.70,407.30 971.20,405.50 C 974.30,402.70 973.80,394.00 971.30,394.00 C 968.80,394.00 968.10,402.70 971.20,405.50 C 972.60,407.10 974.60,408.20 977.60,408.20 C 982.80,408.20 986.80,404.70 986.80,399.70"/>
<path d="M986.80,399.70 L1051.70,399.70"/>
<path d="M1051.70,399.70 L1056.00,391.40 L1065.00,407.80 L1073.80,391.40 L1082.70,407.80 L1087.20,399.70"/>
<path d="M1087.20,399.70 L1133.00,399.70"/>
<path d="M1133.00,390.60 L1133.00,408.40"/>
<path d="M1137.20,390.60 L1137.20,408.40"/>
<path d="M1137.20,399.70 L1247.50,399.70"/>
<path d="M1012.70,399.70 L1012.70,421.30"/>
<path d="M1012.70,421.30 L1020.60,425.50 L1004.40,434.20 L1020.60,443.20 L1004.40,452.30 L1012.70,456.60"/>
<path d="M1012.70,456.60 L1012.70,478.30"/>
<path d="M1012.70,478.30 H1005.40 L1012.70,485.30 L1020.00,478.30 Z"/>
<path d="M1222.10,399.70 L1222.10,421.30"/>
<path d="M1222.10,421.30 L1230.00,425.50 L1213.80,434.20 L1230.00,443.20 L1213.80,452.30 L1222.10,456.60"/>
<path d="M1222.10,456.60 L1222.10,478.30"/>
<path d="M1222.10,478.30 H1214.80 L1222.10,485.30 L1229.40,478.30 Z"/>
<path d="M1039.00,216.00 L1039.00,233.50"/>
<path d="M1021.40,253.00 L1021.40,233.50 L1056.30,233.50 L1056.30,253.00"/>
<path d="M1012.70,253.00 L1030.10,253.00"/>
<path d="M1021.4,253 L1012.9,266.2 H1029.9 Z"/>
<path d="M1021.40,266.20 L1021.40,294.80"/>
<path d="M1021.40,294.80 H1014.10 L1021.40,301.80 L1028.70,294.80 Z"/>
<path d="M1047.8,253 H1064.8 L1056.3,266.2 Z"/>
<path d="M1047.60,266.20 L1065.00,266.20"/>
<path d="M1056.30,266.20 L1056.30,294.40"/>
<path d="M1117.30,216.00 L1117.30,257.30"/>
<path d="M1108.30,257.30 L1126.30,257.30"/>
<path d="M1108.30,261.90 L1126.30,261.90"/>
<path d="M1117.30,261.90 L1117.30,294.80"/>
<path d="M1117.30,294.80 H1110.00 L1117.30,301.80 L1124.60,294.80 Z"/>
<path d="M584.30,330.00 L584.30,351.70"/>
<circle cx="584.3" cy="368.7" r="17" stroke-width="1.3"/>
<path d="M584.30,385.70 L584.30,399.40"/>
<path d="M584.30,399.40 H577.00 L584.30,406.40 L591.60,399.40 Z"/>
<path d="M580.30,358.3 H588.30 M584.30,354.3 V362.3 M580.30,379.7 H588.30" stroke-width="1.1" stroke="#4848f0"/>
<path d="M662.80,330.00 L662.80,351.70"/>
<circle cx="662.8" cy="368.7" r="17" stroke-width="1.3"/>
<path d="M662.80,385.70 L662.80,399.40"/>
<path d="M662.80,399.40 H655.50 L662.80,406.40 L670.10,399.40 Z"/>
<path d="M658.80,358.3 H666.80 M662.80,354.3 V362.3 M658.80,379.7 H666.80" stroke-width="1.1" stroke="#4848f0"/>
</g>
<rect x="1036.10" y="213.20" width="5.8" height="5.6" fill="#1c1cff" stroke="none"/>
<rect x="1036.10" y="230.70" width="5.8" height="5.6" fill="#1c1cff" stroke="none"/>
<rect x="1114.40" y="213.20" width="5.8" height="5.6" fill="#1c1cff" stroke="none"/>
<rect x="852.50" y="309.20" width="5.8" height="5.6" fill="#1c1cff" stroke="none"/>
<rect x="1009.80" y="396.90" width="5.8" height="5.6" fill="#1c1cff" stroke="none"/>
<rect x="1219.20" y="396.90" width="5.8" height="5.6" fill="#1c1cff" stroke="none"/>
<g stroke="#1c1cff" stroke-width="1.1" stroke-dasharray="3.5 2.5" fill="none">
<line x1="920.9" y1="153" x2="922.8" y2="502.5"/>
<line x1="1180.7" y1="344.5" x2="1182.6" y2="502.5"/>
</g>
<g>
<text x="842.30" y="163.70" font-size="13" fill="#0808c4" stroke="#0808c4" stroke-width="0.22" textLength="56.89" lengthAdjust="spacingAndGlyphs">Inside Coil</text>
<text x="933.80" y="163.70" font-size="13" fill="#0808c4" stroke="#0808c4" stroke-width="0.22" textLength="52.72" lengthAdjust="spacingAndGlyphs">Main PCB</text>
<text x="1205.10" y="352.30" font-size="13" fill="#0808c4" stroke="#0808c4" stroke-width="0.22" textLength="55.42" lengthAdjust="spacingAndGlyphs">ADC Stub</text>
<text x="948.20" y="206.70" font-size="13" fill="#000000" stroke="#000000" stroke-width="0.22" textLength="13.73" lengthAdjust="spacingAndGlyphs">L2</text>
<text x="945.40" y="236.60" font-size="13" fill="#000000" stroke="#000000" stroke-width="0.22" textLength="21.58" lengthAdjust="spacingAndGlyphs">15<tspan font-style="italic">µ</tspan></text>
<text x="1167.00" y="207.00" font-size="13" fill="#000000" stroke="#000000" stroke-width="0.22" textLength="13.03" lengthAdjust="spacingAndGlyphs">L1</text>
<text x="1163.80" y="237.00" font-size="13" fill="#000000" stroke="#000000" stroke-width="0.22" textLength="22.38" lengthAdjust="spacingAndGlyphs">15<tspan font-style="italic">µ</tspan></text>
<text x="1222.50" y="221.40" font-size="13" fill="#000000" stroke="#000000" stroke-width="0.22" textLength="47.81" lengthAdjust="spacingAndGlyphs">DAC_TX</text>
<text x="1000.50" y="247.00" font-size="13" fill="#000000" stroke="#000000" stroke-width="0.22" textLength="13.88" lengthAdjust="spacingAndGlyphs">D1</text>
<text x="1060.60" y="247.00" font-size="13" fill="#000000" stroke="#000000" stroke-width="0.22" textLength="15.68" lengthAdjust="spacingAndGlyphs">D2</text>
<text x="969.60" y="282.00" font-size="13" fill="#000000" stroke="#000000" stroke-width="0.22" textLength="46.37" lengthAdjust="spacingAndGlyphs">1N4148</text>
<text x="1061.50" y="281.90" font-size="13" fill="#000000" stroke="#000000" stroke-width="0.22" textLength="47.07" lengthAdjust="spacingAndGlyphs">1N4148</text>
<text x="1121.70" y="250.80" font-size="13" fill="#000000" stroke="#000000" stroke-width="0.22" textLength="13.88" lengthAdjust="spacingAndGlyphs">C1</text>
<text x="1122.00" y="277.00" font-size="13" fill="#000000" stroke="#000000" stroke-width="0.22" textLength="22.58" lengthAdjust="spacingAndGlyphs">47n</text>
<text x="835.20" y="268.90" font-size="13" fill="#000000" stroke="#000000" stroke-width="0.22" textLength="14.78" lengthAdjust="spacingAndGlyphs">C3</text>
<text x="820.90" y="295.40" font-size="13" fill="#000000" stroke="#000000" stroke-width="0.22" textLength="29.60" lengthAdjust="spacingAndGlyphs">100n</text>
<text x="873.60" y="316.70" font-size="13" fill="#000000" stroke="#000000" stroke-width="0.22" textLength="30.31" lengthAdjust="spacingAndGlyphs">V_TX</text>
<text x="795.20" y="333.70" font-size="13" fill="#000000" stroke="#000000" stroke-width="0.22" textLength="48.48" lengthAdjust="spacingAndGlyphs">TX_COIL</text>
<text x="814.10" y="356.30" font-size="13" fill="#000000" stroke="#000000" stroke-width="0.22" textLength="29.58" lengthAdjust="spacingAndGlyphs">4.6m</text>
<text x="957.10" y="390.00" font-size="13" fill="#000000" stroke="#000000" stroke-width="0.22" textLength="14.63" lengthAdjust="spacingAndGlyphs">L4</text>
<text x="950.00" y="420.80" font-size="13" fill="#000000" stroke="#000000" stroke-width="0.22" textLength="29.21" lengthAdjust="spacingAndGlyphs">15<tspan font-style="italic">µ</tspan>H</text>
<text x="1023.50" y="435.00" font-size="13" fill="#000000" stroke="#000000" stroke-width="0.22" textLength="13.18" lengthAdjust="spacingAndGlyphs">R1</text>
<text x="1023.50" y="453.70" font-size="13" fill="#000000" stroke="#000000" stroke-width="0.22" textLength="18.80" lengthAdjust="spacingAndGlyphs">2.2</text>
<text x="1061.60" y="387.10" font-size="13" fill="#000000" stroke="#000000" stroke-width="0.22" textLength="14.58" lengthAdjust="spacingAndGlyphs">R2</text>
<text x="1059.00" y="420.80" font-size="13" fill="#000000" stroke="#000000" stroke-width="0.22" textLength="21.68" lengthAdjust="spacingAndGlyphs">100</text>
<text x="1127.00" y="386.70" font-size="13" fill="#000000" stroke="#000000" stroke-width="0.22" textLength="14.78" lengthAdjust="spacingAndGlyphs">C2</text>
<text x="1128.60" y="420.80" font-size="13" fill="#000000" stroke="#000000" stroke-width="0.22" textLength="13.23" lengthAdjust="spacingAndGlyphs">1<tspan font-style="italic">µ</tspan></text>
<text x="1249.00" y="404.10" font-size="13" fill="#000000" stroke="#000000" stroke-width="0.22" textLength="67.71" lengthAdjust="spacingAndGlyphs">ADC_TXREF</text>
<text x="1232.50" y="435.30" font-size="13" fill="#000000" stroke="#000000" stroke-width="0.22" textLength="14.38" lengthAdjust="spacingAndGlyphs">R3</text>
<text x="1233.70" y="454.00" font-size="13" fill="#000000" stroke="#000000" stroke-width="0.22" textLength="20.97" lengthAdjust="spacingAndGlyphs">10k</text>
<text x="566.70" y="234.00" font-size="13" fill="#000000" stroke="#000000" stroke-width="0.22" textLength="55.13" lengthAdjust="spacingAndGlyphs">*.tran 5m</text>
<text x="570.70" y="256.10" font-size="13" fill="#000000" stroke="#000000" stroke-width="0.22" textLength="130.22" lengthAdjust="spacingAndGlyphs">.ac oct 1000 1k 5Meg</text>
<text x="598.00" y="351.90" font-size="13" fill="#000000" stroke="#000000" stroke-width="0.22" textLength="13.88" lengthAdjust="spacingAndGlyphs">V1</text>
<text x="598.00" y="394.50" font-size="13" fill="#000000" stroke="#000000" stroke-width="0.22" textLength="18.10" lengthAdjust="spacingAndGlyphs">3.3</text>
<text x="676.20" y="351.90" font-size="13" fill="#000000" stroke="#000000" stroke-width="0.22" textLength="15.68" lengthAdjust="spacingAndGlyphs">V2</text>
<text x="676.20" y="395.30" font-size="13" fill="#000000" stroke="#000000" stroke-width="0.22" textLength="109.12" lengthAdjust="spacingAndGlyphs">SINE(1.4 1.4 7.5k)</text>
<text x="0" y="0" transform="translate(590.10 329.30) rotate(-90)" font-size="13" fill="#000000" stroke="#000000" stroke-width="0.22" textLength="22.72" lengthAdjust="spacingAndGlyphs">VCC</text>
<text x="0" y="0" transform="translate(668.00 329.30) rotate(-90)" font-size="13" fill="#000000" stroke="#000000" stroke-width="0.22" textLength="45.91" lengthAdjust="spacingAndGlyphs">DAC_TX</text>
<text x="0" y="0" transform="translate(1062.20 319.50) rotate(-90)" font-size="13" fill="#000000" stroke="#000000" stroke-width="0.22" textLength="24.72" lengthAdjust="spacingAndGlyphs">VCC</text>
</g>
</svg>
</body></html>
